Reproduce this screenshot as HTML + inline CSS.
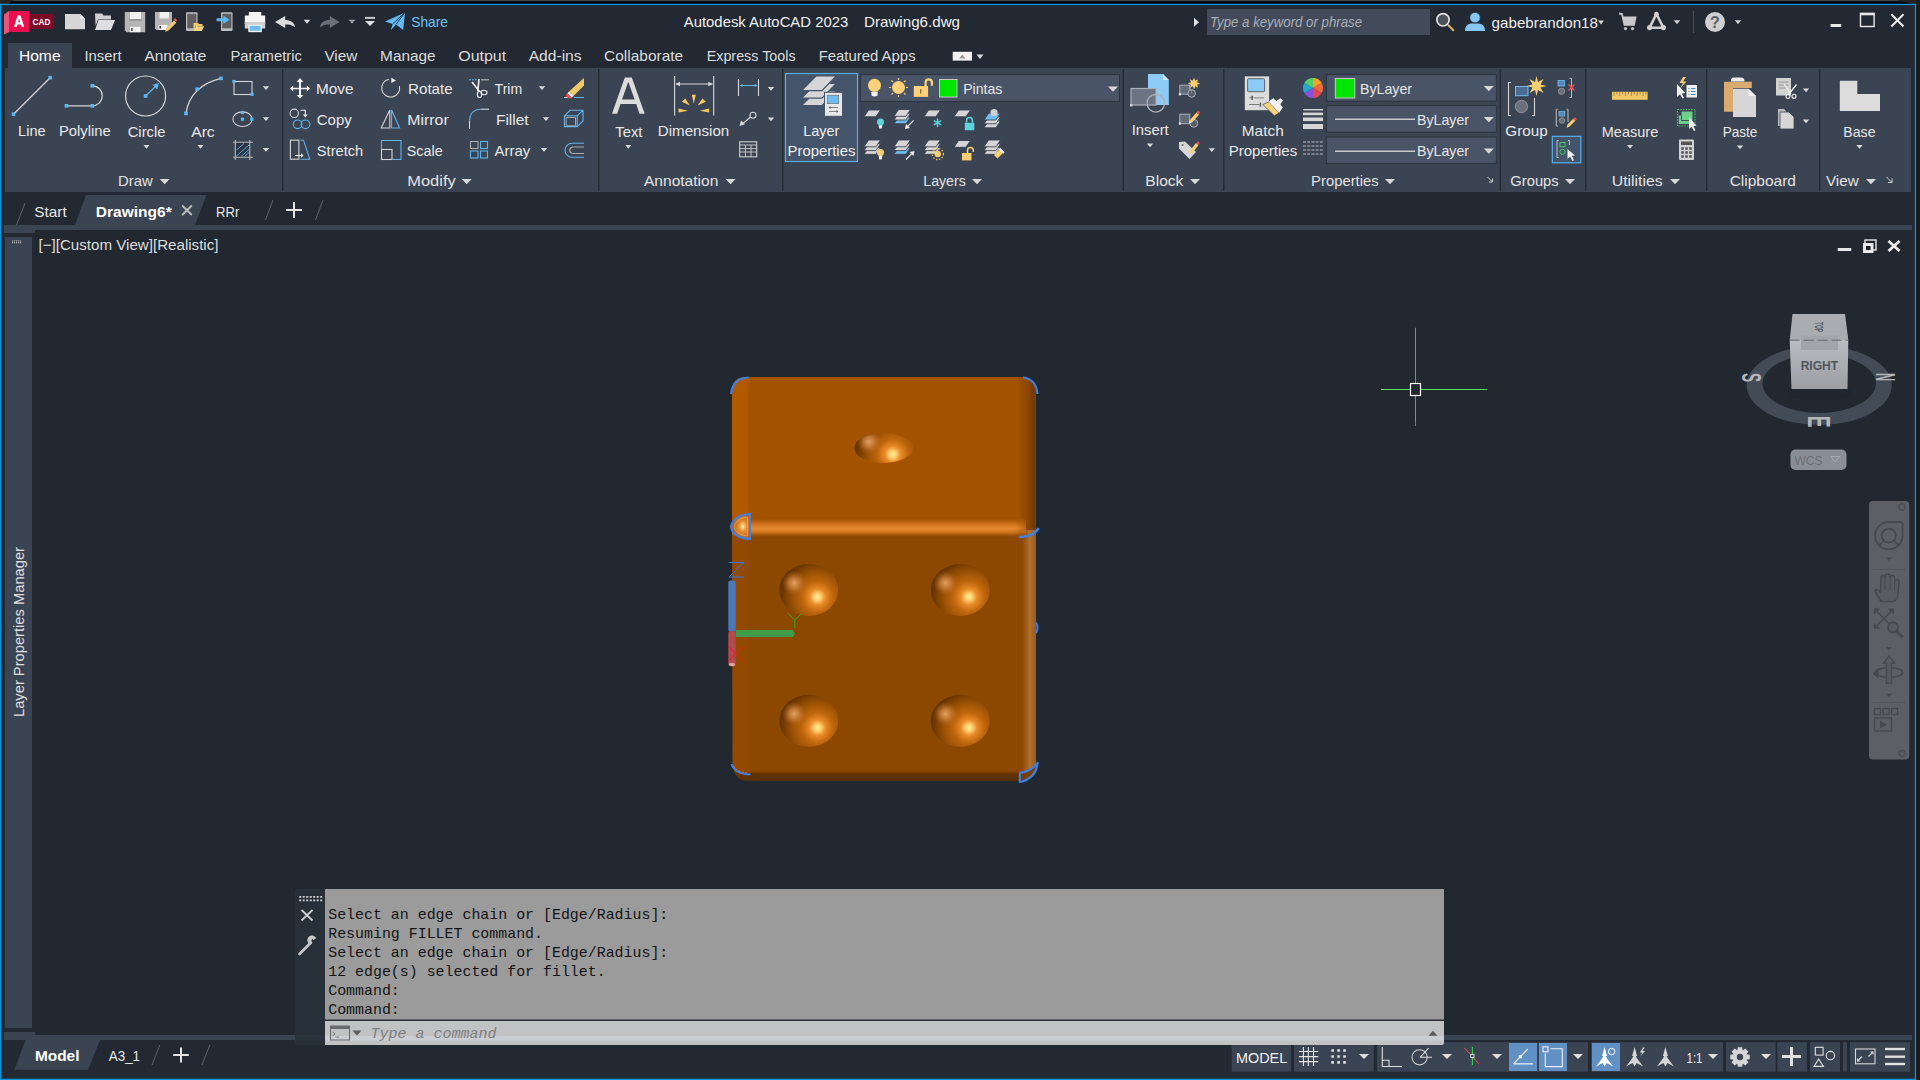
<!DOCTYPE html>
<html><head><meta charset="utf-8"><title>AutoCAD</title>
<style>
html,body{margin:0;padding:0;background:#222933;overflow:hidden;width:1920px;height:1080px}
svg{display:block}
text{white-space:pre}
</style></head><body>
<svg width="1920" height="1080" viewBox="0 0 1920 1080">
<rect x="0" y="0" width="1920" height="1080" fill="#222933" />
<rect x="0" y="0" width="1920" height="1.2" fill="#484644" />
<rect x="0" y="1.2" width="1920" height="2.7" fill="#03050d" />
<path d="M0 0 L14 0 Q11 1 9 3.9 L0 3.9 Z" fill="#252321"/>
<path d="M1895 1.2 Q1908 1.5 1912 3.9 L1920 3.9 L1920 0 L1900 0 Z" fill="#252321"/>
<rect x="1916" y="0" width="4" height="1080" fill="#1c1917" />
<rect x="0" y="3.8" width="1916.1" height="1.3" fill="#0b96da" />
<rect x="0" y="3.8" width="1.3" height="1076.2" fill="#0b96da" />
<rect x="1914.8" y="3.8" width="1.3" height="1076.2" fill="#0b96da" />
<rect x="0" y="1078.7" width="1916.1" height="1.3" fill="#0b96da" />
<rect x="8" y="43" width="64" height="25" fill="#3b4453" />
<rect x="5" y="68" width="1906" height="124" fill="#3b4453" />
<rect x="282" y="69" width="1.5" height="122" fill="#262c36" />
<rect x="598" y="69" width="1.5" height="122" fill="#262c36" />
<rect x="782" y="69" width="1.5" height="122" fill="#262c36" />
<rect x="1122.5" y="69" width="1.5" height="122" fill="#262c36" />
<rect x="1223" y="69" width="1.5" height="122" fill="#262c36" />
<rect x="1499.5" y="69" width="1.5" height="122" fill="#262c36" />
<rect x="1585" y="69" width="1.5" height="122" fill="#262c36" />
<rect x="1706" y="69" width="1.5" height="122" fill="#262c36" />
<rect x="1819" y="69" width="1.5" height="122" fill="#262c36" />
<path d="M86 195 L206.5 195 L195 225 L75 225 Z" fill="#3b4453"/>
<rect x="4" y="225" width="1908" height="5" fill="#3b4453" />
<rect x="35" y="230" width="1877" height="805" fill="#212830" />
<rect x="4" y="230" width="31" height="3" fill="#3b4453" />
<rect x="5" y="237" width="27" height="791" fill="#3b4453" />
<rect x="4" y="1032" width="31" height="3" fill="#3b4453" />
<rect x="4" y="1035" width="1908" height="5" fill="#3b4453" />
<path d="M4 14.5 L9 11 L9 32 L4 34.5 Z" fill="#e9557f"/>
<rect x="9" y="11" width="20" height="21" fill="#e8104f" />
<rect x="29" y="14" width="25" height="15" fill="#7c0a27" />
<path d="M14 26.8 L17.6 15.4 L20.6 15.4 L24.2 26.8 L21.4 26.8 L20.7 24.4 L17.5 24.4 L16.8 26.8 Z M18.1 22.2 L20.1 22.2 L19.1 18.6 Z" fill="#fff"/>
<text x="32.6" y="24.8" font-family="Liberation Sans" font-size="8.6" fill="#ffffff" font-weight="bold" font-style="normal" text-anchor="start" textLength="17.8" lengthAdjust="spacingAndGlyphs" >CAD</text>
<path d="M65 14 L80.5 14 L85 18.5 L85 29.3 L65 29.3 Z" fill="#d6d6d6"/>
<path d="M80.5 14 L80.5 18.5 L85 18.5 Z" fill="#f2f2f2"/>
<path d="M95 13.5 L102 13.5 L103.5 15.5 L111 15.5 L111 19.5 L98 19.5 L95.6 26 Z" fill="#d0d0d0"/>
<path d="M98.5 20 L115 20 L111 30 L95 30 Z" fill="#dedede"/>
<path d="M124.8 12 L145.2 12 L145.2 32.2 L126.5 32.2 L124.8 30.5 Z" fill="#b4b4b4"/>
<rect x="130" y="12" width="11" height="7.5" fill="#f0f0f0" />
<rect x="129.5" y="19.5" width="12" height="0.8" fill="#5a5a5a" />
<rect x="130" y="26.8" width="10.5" height="5.4" fill="#f2f2f2" />
<rect x="131.2" y="28" width="1.4" height="3" fill="#333" />
<path d="M155 12 L172 12 L172 24 L166 30 L156.5 30 L155 28.5 Z" fill="#b4b4b4"/>
<rect x="159.5" y="12" width="9.5" height="6.5" fill="#f0f0f0" />
<rect x="158.5" y="25" width="9" height="5" fill="#f2f2f2" />
<rect x="159.5" y="26" width="1.6" height="2.5" fill="#333" />
<path d="M165 32 L166.5 28 L174 20.5 L176.3 22.8 L168.8 30.3 Z" fill="#f3c86b"/>
<path d="M173.5 19.5 L175 18 L177.3 20.3 L175.8 21.8 Z" fill="#e9545a"/>
<rect x="186" y="12.2" width="11.5" height="18.8" fill="#bdbdbd" rx="1"/>
<rect x="187.2" y="13.8" width="9.2" height="14.5" fill="#5f5f5f" />
<path d="M193.5 23 L198 23 L199 24 L202.5 24 L202.5 26 L195.5 26 L193.5 31 Z" fill="#f4c76a"/>
<path d="M195.8 26.2 L204.2 26.2 L201.8 31 L193.5 31 Z" fill="#f8d47e"/>
<rect x="221" y="12.2" width="11.5" height="18.8" fill="#bdbdbd" rx="1"/>
<rect x="222.2" y="13.8" width="9.2" height="14.5" fill="#5f5f5f" />
<path d="M217 18.8 L223.8 18.8 L223.8 16.4 L228.8 19.8 L223.8 23.2 L223.8 20.8 L217 20.8 Z" fill="#5cb8f2" stroke="#5cb8f2" stroke-width="1"/>
<rect x="248.8" y="12" width="12.5" height="6.6" fill="#f4f4f4" />
<rect x="244.8" y="15.5" width="20.4" height="8.5" fill="#f4f4f4" />
<rect x="244.8" y="22" width="20.4" height="6.5" fill="#cfcfcf" />
<rect x="248.3" y="24.8" width="13.5" height="7.4" fill="#f4f4f4" />
<rect x="249.6" y="25.8" width="11" height="5" fill="#6fbcf0" />
<path d="M275 22 L285.2 16 L285.2 20 C290 20 294.5 22 295.2 27.5 C292.5 25 289.5 24.5 285.2 24.5 L285.2 28 Z" fill="#dcdcdc"/>
<path d="M303.75 19.8 L310.25 19.8 L307 23.8 Z" fill="#dcdcdc"/>
<path d="M339.5 22 L329.8 16 L329.8 20 C325 20 320.5 22 320 27.5 C322.5 25 325.5 24.5 329.8 24.5 L329.8 28 Z" fill="#6a707a"/>
<path d="M348.75 19.8 L355.25 19.8 L352 23.8 Z" fill="#9a9ea4"/>
<rect x="365" y="16.9" width="10" height="2" fill="#c8c8c8" />
<path d="M365.0 21 L375.0 21 L370 26 Z" fill="#e0e0e0"/>
<path d="M385 21.5 L405 12.4 L403.2 30 L396 24.5 L390.8 30.2 L392.6 24 Z" fill="#62bbf4"/>
<path d="M392.6 24 L405 12.4 M396 24.5 L405 12.4" stroke="#222933" stroke-width="0.9"/>
<text x="411.2" y="27" font-family="Liberation Sans" font-size="15" fill="#6cc2f7" font-weight="normal" font-style="normal" text-anchor="start" textLength="36.8" lengthAdjust="spacingAndGlyphs" >Share</text>
<text x="683.8" y="26.6" font-family="Liberation Sans" font-size="15" fill="#f0f0f0" font-weight="normal" font-style="normal" text-anchor="start" textLength="164.4" lengthAdjust="spacingAndGlyphs" >Autodesk AutoCAD 2023</text>
<text x="864" y="26.6" font-family="Liberation Sans" font-size="15" fill="#f0f0f0" font-weight="normal" font-style="normal" text-anchor="start" textLength="96" lengthAdjust="spacingAndGlyphs" >Drawing6.dwg</text>
<path d="M1194 17.7 L1199 22.2 L1194 26.7 Z" fill="#e0e0e0"/>
<rect x="1207" y="9" width="223" height="26" fill="#434b5b" />
<text x="1210" y="27" font-family="Liberation Sans" font-size="14" fill="#a9aeb6" font-weight="normal" font-style="italic" text-anchor="start" textLength="152" lengthAdjust="spacingAndGlyphs" >Type a keyword or phrase</text>
<path d="M1448.4 25.3 L1453.3 30.2" stroke="#dcae70" stroke-width="2.1" stroke-linecap="round"/>
<circle cx="1443" cy="19.8" r="6.2" fill="#4b5159" stroke="#e2e2e2" stroke-width="1.7"/>
<path d="M1465 31 Q1465 24 1471 23.5 L1479 23.5 Q1485 24 1485 31 Z" fill="#86c6f4"/>
<circle cx="1475" cy="17.6" r="5.3" fill="#86c6f4" stroke="#222933" stroke-width="0.8"/>
<text x="1491.6" y="27.6" font-family="Liberation Sans" font-size="15" fill="#ececec" font-weight="normal" font-style="normal" text-anchor="start" textLength="106.4" lengthAdjust="spacingAndGlyphs" >gabebrandon18</text>
<path d="M1598.0 20.5 L1604.0 20.5 L1601 24.5 Z" fill="#d8d8d8"/>
<path d="M1619 13.5 L1622 14 L1624.5 24.8 L1634 24.8 L1635.5 17.5 L1622.8 17.5" fill="none" stroke="#c9c9c9" stroke-width="1.8"/>
<path d="M1623 17.5 L1635.5 17.5 L1634 24.5 L1624.5 24.5 Z" fill="#c9c9c9"/>
<circle cx="1625.5" cy="28.6" r="1.6" fill="#c9c9c9"/><circle cx="1632.5" cy="28.6" r="1.6" fill="#c9c9c9"/>
<path d="M1656.4 14 L1649.5 27.8 L1663.5 27.8 Z" fill="none" stroke="#d0d0d0" stroke-width="2.6" stroke-linejoin="round"/>
<circle cx="1656.4" cy="14.2" r="2.4" fill="#d0d0d0"/><circle cx="1649.6" cy="27.6" r="2.6" fill="#d0d0d0"/><circle cx="1663.4" cy="27.6" r="2.6" fill="#d0d0d0"/>
<path d="M1673.75 20.2 L1680.25 20.2 L1677 24.2 Z" fill="#d0d0d0"/>
<rect x="1693" y="11" width="1" height="22" fill="#4a5260" />
<circle cx="1715" cy="22" r="10" fill="#cfcfcf"/>
<text x="1715" y="28.2" font-family="Liberation Sans" font-size="16" fill="#5a5f66" font-weight="bold" font-style="normal" text-anchor="middle" >?</text>
<path d="M1734.75 20.2 L1741.25 20.2 L1738 24.2 Z" fill="#d0d0d0"/>
<rect x="1830.6" y="24" width="10.6" height="3" fill="#e8e8e8" />
<rect x="1860.5" y="13.5" width="13.6" height="13" fill="none" stroke="#e8e8e8" stroke-width="1.4"/>
<rect x="1860" y="12.8" width="14.8" height="2.5" fill="#e8e8e8" />
<path d="M1891.3 14.3 L1903.5 26.5 M1903.5 14.3 L1891.3 26.5" stroke="#eeeeee" stroke-width="2"/>
<text x="18.9" y="61" font-family="Liberation Sans" font-size="15" fill="#ffffff" font-weight="normal" font-style="normal" text-anchor="start" textLength="41.7" lengthAdjust="spacingAndGlyphs" >Home</text>
<text x="84.4" y="61" font-family="Liberation Sans" font-size="15" fill="#dcdcdc" font-weight="normal" font-style="normal" text-anchor="start" textLength="37.2" lengthAdjust="spacingAndGlyphs" >Insert</text>
<text x="144.4" y="61" font-family="Liberation Sans" font-size="15" fill="#dcdcdc" font-weight="normal" font-style="normal" text-anchor="start" textLength="61.9" lengthAdjust="spacingAndGlyphs" >Annotate</text>
<text x="230.4" y="61" font-family="Liberation Sans" font-size="15" fill="#dcdcdc" font-weight="normal" font-style="normal" text-anchor="start" textLength="71.5" lengthAdjust="spacingAndGlyphs" >Parametric</text>
<text x="324.4" y="61" font-family="Liberation Sans" font-size="15" fill="#dcdcdc" font-weight="normal" font-style="normal" text-anchor="start" textLength="33.0" lengthAdjust="spacingAndGlyphs" >View</text>
<text x="380.09999999999997" y="61" font-family="Liberation Sans" font-size="15" fill="#dcdcdc" font-weight="normal" font-style="normal" text-anchor="start" textLength="55.5" lengthAdjust="spacingAndGlyphs" >Manage</text>
<text x="458.29999999999995" y="61" font-family="Liberation Sans" font-size="15" fill="#dcdcdc" font-weight="normal" font-style="normal" text-anchor="start" textLength="47.8" lengthAdjust="spacingAndGlyphs" >Output</text>
<text x="528.6999999999999" y="61" font-family="Liberation Sans" font-size="15" fill="#dcdcdc" font-weight="normal" font-style="normal" text-anchor="start" textLength="52.9" lengthAdjust="spacingAndGlyphs" >Add-ins</text>
<text x="604.1" y="61" font-family="Liberation Sans" font-size="15" fill="#dcdcdc" font-weight="normal" font-style="normal" text-anchor="start" textLength="79.1" lengthAdjust="spacingAndGlyphs" >Collaborate</text>
<text x="706.6999999999999" y="61" font-family="Liberation Sans" font-size="15" fill="#dcdcdc" font-weight="normal" font-style="normal" text-anchor="start" textLength="88.9" lengthAdjust="spacingAndGlyphs" >Express Tools</text>
<text x="818.6999999999999" y="61" font-family="Liberation Sans" font-size="15" fill="#dcdcdc" font-weight="normal" font-style="normal" text-anchor="start" textLength="96.9" lengthAdjust="spacingAndGlyphs" >Featured Apps</text>
<rect x="952.7" y="51.8" width="19.3" height="8.8" fill="#f2f2f2" />
<path d="M959 58.5 L962.3 54.5 L965.6 58.5 Z" fill="#9a9a9a"/>
<path d="M976.5 54.5 L983.5 54.5 L980 59.0 Z" fill="#d8d8d8"/>
<path d="M13.5 114.2 L50.2 77.7" stroke="#d4d4d4" stroke-width="1.2"/>
<rect x="11.7" y="112.4" width="3.6" height="3.6" fill="#5ab7f4" />
<rect x="48.4" y="75.9" width="3.6" height="3.6" fill="#5ab7f4" />
<text x="18.05" y="135.8" font-family="Liberation Sans" font-size="15" fill="#e8e8e8" font-weight="normal" font-style="normal" text-anchor="start" textLength="27.65" lengthAdjust="spacingAndGlyphs" >Line</text>
<path d="M66.4 105.8 L92.3 105.8 M92.3 85.8 A10 10 0 0 1 92.3 105.8" fill="none" stroke="#d4d4d4" stroke-width="1.2"/>
<rect x="64.6" y="104.0" width="3.6" height="3.6" fill="#5ab7f4" />
<rect x="90.5" y="104.0" width="3.6" height="3.6" fill="#5ab7f4" />
<rect x="90.5" y="84.0" width="3.6" height="3.6" fill="#5ab7f4" />
<text x="58.9" y="135.8" font-family="Liberation Sans" font-size="15" fill="#e8e8e8" font-weight="normal" font-style="normal" text-anchor="start" textLength="51.8" lengthAdjust="spacingAndGlyphs" >Polyline</text>
<circle cx="145.6" cy="96" r="20" fill="none" stroke="#d4d4d4" stroke-width="1.2"/>
<path d="M145.6 96 L156.5 85.5" stroke="#5ab7f4" stroke-width="1.3"/>
<path d="M159 83 L152.5 84.8 L157.2 89.5 Z" fill="#5ab7f4"/>
<rect x="143.8" y="94.2" width="3.6" height="3.6" fill="#5ab7f4" />
<text x="127.7" y="136.5" font-family="Liberation Sans" font-size="15" fill="#e8e8e8" font-weight="normal" font-style="normal" text-anchor="start" textLength="37.8" lengthAdjust="spacingAndGlyphs" >Circle</text>
<path d="M143.5 145 L149.5 145 L146.5 148.8 Z" fill="#d8d8d8"/>
<path d="M186 113.4 Q190 86 221 78.4" fill="none" stroke="#d4d4d4" stroke-width="1.2"/>
<rect x="184.2" y="111.6" width="3.6" height="3.6" fill="#5ab7f4" />
<rect x="195.4" y="87.4" width="3.6" height="3.6" fill="#5ab7f4" />
<rect x="219.2" y="76.6" width="3.6" height="3.6" fill="#5ab7f4" />
<text x="191.2" y="136.5" font-family="Liberation Sans" font-size="15" fill="#e8e8e8" font-weight="normal" font-style="normal" text-anchor="start" textLength="23.5" lengthAdjust="spacingAndGlyphs" >Arc</text>
<path d="M197.5 145 L203.5 145 L200.5 148.8 Z" fill="#d8d8d8"/>
<rect x="234" y="81.5" width="18" height="13" fill="none" stroke="#d4d4d4" stroke-width="1.1"/>
<rect x="232.4" y="79.9" width="3.2" height="3.2" fill="#5ab7f4" />
<rect x="250.4" y="92.7" width="3.2" height="3.2" fill="#5ab7f4" />
<path d="M262.8 86.2 L269.2 86.2 L266 90.0 Z" fill="#d8d8d8"/>
<ellipse cx="242.5" cy="119.2" rx="9.6" ry="7.3" fill="none" stroke="#d4d4d4" stroke-width="1.1"/>
<rect x="240.9" y="110.9" width="3.2" height="3.2" fill="#5ab7f4" />
<rect x="240.9" y="117.6" width="3.2" height="3.2" fill="#5ab7f4" />
<rect x="250.2" y="117.6" width="3.2" height="3.2" fill="#5ab7f4" />
<path d="M262.8 117.2 L269.2 117.2 L266 121.0 Z" fill="#d8d8d8"/>
<rect x="235.5" y="142.2" width="14.5" height="15" fill="#2e3542"/>
<path d="M235.3 140 L235.3 160 M249.7 140 L249.7 160 M233 142.2 L253 142.2 M233 157.3 L253 157.3" stroke="#b8b8b8" stroke-width="1.1"/>
<path d="M236.5 150 L244 143.5 M236.5 156 L249 145 M241 156.5 L249 149.5 M244.5 156.5 L249 152.5" stroke="#5fb4ee" stroke-width="0.9"/>
<path d="M262.8 148 L269.2 148 L266 151.8 Z" fill="#d8d8d8"/>
<text x="118.05" y="185.6" font-family="Liberation Sans" font-size="15" fill="#e2e2e2" font-weight="normal" font-style="normal" text-anchor="start" textLength="34.65" lengthAdjust="spacingAndGlyphs" >Draw</text>
<path d="M159.7 179 L169.7 179 L164.7 184.2 Z" fill="#d8d8d8"/>
<path d="M300 78 L303.3 82 L301 82 L301 87.8 L306.8 87.8 L306.8 85.5 L310 88.5 L306.8 91.5 L306.8 89.2 L301 89.2 L301 95 L303.3 95 L300 98.5 L296.7 95 L299 95 L299 89.2 L293.2 89.2 L293.2 91.5 L290 88.5 L293.2 85.5 L293.2 87.8 L299 87.8 L299 82 L296.7 82 Z" fill="#f0f0f0"/>
<text x="316.0" y="94.2" font-family="Liberation Sans" font-size="15" fill="#e8e8e8" font-weight="normal" font-style="normal" text-anchor="start" textLength="37.5" lengthAdjust="spacingAndGlyphs" >Move</text>
<circle cx="294.3" cy="113.3" r="4.2" fill="none" stroke="#d4d4d4" stroke-width="1.1"/>
<path d="M300.5 110.3 L305.3 110.3 L305.3 115" fill="none" stroke="#eee" stroke-width="1.1"/>
<path d="M302.8 114.5 L307.8 114.5 L305.3 117.5 Z" fill="#eee"/>
<circle cx="297.6" cy="124.3" r="4.3" fill="none" stroke="#5fb4ee" stroke-width="1.1"/>
<circle cx="305.5" cy="124.3" r="4.3" fill="none" stroke="#5fb4ee" stroke-width="1.1"/>
<text x="316.8" y="124.5" font-family="Liberation Sans" font-size="15" fill="#e8e8e8" font-weight="normal" font-style="normal" text-anchor="start" textLength="34.9" lengthAdjust="spacingAndGlyphs" >Copy</text>
<rect x="290.4" y="140.2" width="8.5" height="19" fill="none" stroke="#d4d4d4" stroke-width="1.1"/>
<path d="M300.5 140.2 L303.5 140.2 L309.8 159.2 L300.5 159.2" fill="none" stroke="#5fb4ee" stroke-width="1.1"/>
<path d="M295 155.5 L301.5 155.5" stroke="#eee" stroke-width="1.1"/><path d="M301 153.3 L303.6 155.5 L301 157.7 Z" fill="#eee"/>
<text x="316.8" y="155.8" font-family="Liberation Sans" font-size="15" fill="#e8e8e8" font-weight="normal" font-style="normal" text-anchor="start" textLength="46.4" lengthAdjust="spacingAndGlyphs" >Stretch</text>
<path d="M389 79.2 A9 9 0 1 0 399.4 86" fill="none" stroke="#d4d4d4" stroke-width="1.1"/>
<path d="M391.3 77.8 L396 80.4 L391.3 83 Z" fill="#eee"/>
<text x="408.0" y="94.2" font-family="Liberation Sans" font-size="15" fill="#e8e8e8" font-weight="normal" font-style="normal" text-anchor="start" textLength="44.7" lengthAdjust="spacingAndGlyphs" >Rotate</text>
<path d="M381.2 128 L389.8 110 L389.8 128 Z" fill="none" stroke="#d4d4d4" stroke-width="1.1"/>
<path d="M391.6 110 L391.6 128 L399.6 128 Z" fill="none" stroke="#5fb4ee" stroke-width="1.1"/>
<text x="407.3" y="124.5" font-family="Liberation Sans" font-size="15" fill="#e8e8e8" font-weight="normal" font-style="normal" text-anchor="start" textLength="41.4" lengthAdjust="spacingAndGlyphs" >Mirror</text>
<path d="M381.5 149 L381.5 140.5 L401 140.5 L401 159.5 L392.5 159.5" fill="none" stroke="#5fb4ee" stroke-width="1.1"/>
<rect x="381.5" y="149.5" width="10.5" height="10" fill="none" stroke="#d4d4d4" stroke-width="1.1"/>
<text x="406.8" y="155.8" font-family="Liberation Sans" font-size="15" fill="#e8e8e8" font-weight="normal" font-style="normal" text-anchor="start" textLength="35.9" lengthAdjust="spacingAndGlyphs" >Scale</text>
<path d="M469 79.8 L479 79.8" stroke="#5fb4ee" stroke-width="1.1" stroke-dasharray="2 1"/><path d="M481 79.8 L489 79.8" stroke="#bbb" stroke-width="1.1"/>
<path d="M472 82 L479.5 91.5 M479 79 L477.8 91.5" stroke="#f0f0f0" stroke-width="1.6"/>
<ellipse cx="479.5" cy="94.5" rx="2.2" ry="3" fill="none" stroke="#f0f0f0" stroke-width="1.1"/><ellipse cx="484" cy="92.5" rx="3" ry="2.2" fill="none" stroke="#f0f0f0" stroke-width="1.1"/>
<text x="494.6" y="94.2" font-family="Liberation Sans" font-size="15" fill="#e8e8e8" font-weight="normal" font-style="normal" text-anchor="start" textLength="27.6" lengthAdjust="spacingAndGlyphs" >Trim</text>
<path d="M538.8 86.2 L545.2 86.2 L542 90.0 Z" fill="#d8d8d8"/>
<path d="M469.5 129 L469.5 121 " stroke="#d4d4d4" stroke-width="1.1"/><path d="M469.5 121 Q470 109.5 480.5 109.2" fill="none" stroke="#5fb4ee" stroke-width="1.1"/><path d="M480.5 109.2 L489 109.2" stroke="#d4d4d4" stroke-width="1.1"/>
<text x="495.9" y="124.5" font-family="Liberation Sans" font-size="15" fill="#e8e8e8" font-weight="normal" font-style="normal" text-anchor="start" textLength="32.8" lengthAdjust="spacingAndGlyphs" >Fillet</text>
<path d="M542.8 117.2 L549.2 117.2 L546 121.0 Z" fill="#d8d8d8"/>
<rect x="470.5" y="141.5" width="7.5" height="7" fill="none" stroke="#aaa" stroke-width="1.1"/>
<rect x="480.5" y="141.5" width="7" height="7" fill="none" stroke="#5fb4ee" stroke-width="1.1"/>
<rect x="470.5" y="151" width="7.5" height="7" fill="none" stroke="#5fb4ee" stroke-width="1.1"/>
<rect x="480.5" y="151" width="7" height="7" fill="none" stroke="#5fb4ee" stroke-width="1.1"/>
<text x="494.5" y="155.8" font-family="Liberation Sans" font-size="15" fill="#e8e8e8" font-weight="normal" font-style="normal" text-anchor="start" textLength="35.7" lengthAdjust="spacingAndGlyphs" >Array</text>
<path d="M540.8 148 L547.2 148 L544 151.8 Z" fill="#d8d8d8"/>
<path d="M584 78 L584 85.5 L573.5 96 L569 91.5 Z" fill="#f2c866"/>
<path d="M569 91.5 L573.5 96 L571.8 97.8 L567.3 93.3 Z" fill="#f4f4f4"/>
<path d="M567.3 93.3 L571.8 97.8 L570 98.5 Q566 98 566 95 Z" fill="#e84b50"/>
<path d="M564 97.5 L567.5 97.5" stroke="#ddd" stroke-width="1"/><path d="M574 97.5 L584 97.5" stroke="#5fb4ee" stroke-width="1"/>
<path d="M564.4 126.6 L564.4 115.8 L570.2 110.2 L583 110.2 L583 121 L577.2 126.6 Z M564.4 115.8 L577.2 115.8 L583 110.2 M577.2 115.8 L577.2 126.6" fill="none" stroke="#5fb4ee" stroke-width="1.1" stroke-linejoin="round"/>
<path d="M566.2 125.8 L566.2 117.5 L575.5 117.5 L575.5 125.8 Z" fill="none" stroke="#a8a8a8" stroke-width="1"/>
<path d="M584 143.2 L572 143.2 A7 7 0 0 0 572 157.3 L584 157.3" fill="none" stroke="#5fb4ee" stroke-width="1.1"/>
<path d="M584 147 L572.5 147 A3.3 3.3 0 0 0 572.5 153.5 L584 153.5" fill="none" stroke="#aaa" stroke-width="1.1"/>
<text x="407.3" y="185.6" font-family="Liberation Sans" font-size="15" fill="#e2e2e2" font-weight="normal" font-style="normal" text-anchor="start" textLength="48.4" lengthAdjust="spacingAndGlyphs" >Modify</text>
<path d="M461.7 179 L471.7 179 L466.7 184.2 Z" fill="#d8d8d8"/>
<path d="M612 113.7 L624.8 77.5 L631.8 77.5 L644.7 113.7 L639.5 113.7 L636.2 104 L620.5 104 L617.2 113.7 Z M622 99.5 L634.6 99.5 L628.3 81.7 Z" fill="#dcdcdc"/>
<text x="615.3" y="136.6" font-family="Liberation Sans" font-size="15" fill="#e8e8e8" font-weight="normal" font-style="normal" text-anchor="start" textLength="27.2" lengthAdjust="spacingAndGlyphs" >Text</text>
<path d="M625.3 145 L631.3 145 L628.3 148.8 Z" fill="#d8d8d8"/>
<path d="M674.6 76 L674.6 115.5 M713.7 76 L713.7 115.5 M676 84 L712.5 84" stroke="#d8d8d8" stroke-width="1.1"/>
<path d="M675.5 84 L680 81.7 L680 86.3 Z M712.8 84 L708.3 81.7 L708.3 86.3 Z" fill="#d8d8d8"/>
<path d="M691.8 94.8 L695.8 94.8 L693.8 103.8 Z M681.8 101.8 L685.2 98.4 L690 105.6 Z M705.8 101.8 L702.4 98.4 L697.6 105.6 Z M678.5 108.6 L678.5 112.6 L688 110.8 Z M709.1 108.6 L709.1 112.6 L699.6 110.8 Z" fill="#f5c862"/>
<text x="657.8" y="136.2" font-family="Liberation Sans" font-size="15" fill="#e8e8e8" font-weight="normal" font-style="normal" text-anchor="start" textLength="71.4" lengthAdjust="spacingAndGlyphs" >Dimension</text>
<path d="M738.5 79 L738.5 96 M758.5 79 L758.5 96" stroke="#d8d8d8" stroke-width="1.1"/><path d="M740 85.5 L757 85.5" stroke="#5fb4ee" stroke-width="1.1"/>
<path d="M739.6 85.5 L742.5 84 L742.5 87 Z M757.5 85.5 L754.6 84 L754.6 87 Z" fill="#5fb4ee"/>
<path d="M767.8 87 L774.2 87 L771 90.8 Z" fill="#d8d8d8"/>
<circle cx="753" cy="115.2" r="3" fill="none" stroke="#d8d8d8" stroke-width="1.1"/><path d="M750.5 117 L743 123.5" stroke="#d8d8d8" stroke-width="1.1"/><path d="M739.5 126 L741 120.5 L745 124.2 Z" fill="#d8d8d8"/>
<path d="M767.8 117.5 L774.2 117.5 L771 121.3 Z" fill="#d8d8d8"/>
<rect x="739.7" y="141.8" width="17" height="15" fill="none" stroke="#cfcfcf" stroke-width="1.1"/><path d="M739.7 145 L756.7 145 M739.7 148.6 L756.7 148.6 M739.7 152 L756.7 152 M745.4 145 L745.4 156.8 M751 145 L751 156.8" stroke="#cfcfcf" stroke-width="0.9"/>
<text x="644.0" y="185.6" font-family="Liberation Sans" font-size="15" fill="#e2e2e2" font-weight="normal" font-style="normal" text-anchor="start" textLength="74.3" lengthAdjust="spacingAndGlyphs" >Annotation</text>
<path d="M725.6 179 L735.6 179 L730.6 184.2 Z" fill="#d8d8d8"/>
<rect x="785.5" y="73.5" width="72" height="88" fill="#44546a" stroke="#5aaef0" stroke-width="1.2"/>
<path d="M801.6 105.7 L816 91 L836.3 91 L821.9 105.7 Z" fill="#d6d6d6" stroke="#44546a" stroke-width="1.2"/>
<path d="M801.6 98.2 L816 83.5 L836.3 83.5 L821.9 98.2 Z" fill="#d6d6d6" stroke="#44546a" stroke-width="1.2"/>
<path d="M801.6 90.7 L816 76 L836.3 76 L821.9 90.7 Z" fill="#d6d6d6" stroke="#44546a" stroke-width="1.2"/>
<rect x="824.5" y="92.3" width="18" height="24" fill="#e8e8e8" stroke="#44546a" stroke-width="1"/>
<rect x="827.2" y="95.2" width="11.5" height="8.5" fill="#6fbcf0" stroke="#666" stroke-width="0.6"/>
<path d="M829 107.5 L838 107.5 M829 111.5 L838 111.5" stroke="#666" stroke-width="0.8"/><path d="M828.5 107.5 L830.5 106 L830.5 109 Z M838.5 111.5 L836.5 110 L836.5 113 Z" fill="#666"/>
<text x="803.3" y="135.8" font-family="Liberation Sans" font-size="15" fill="#f0f0f0" font-weight="normal" font-style="normal" text-anchor="start" textLength="36.0" lengthAdjust="spacingAndGlyphs" >Layer</text>
<text x="787.6" y="155.5" font-family="Liberation Sans" font-size="15" fill="#f0f0f0" font-weight="normal" font-style="normal" text-anchor="start" textLength="67.8" lengthAdjust="spacingAndGlyphs" >Properties</text>
<rect x="860.5" y="74.6" width="259" height="27" fill="#4a5467" stroke="#2c333f" stroke-width="1"/>
<circle cx="874.5" cy="85.3" r="6.5" fill="#fbd27a"/><path d="M871.3 91.8 L877.7 91.8 L877.5 95.5 Q874.5 97.5 871.5 95.5 Z" fill="#f2f2f2"/>
<circle cx="898.5" cy="87.5" r="6.5" fill="#fbd27a"/>
<path d="M898.5 78 L898.5 80 M898.5 95 L898.5 97 M889 87.5 L891 87.5 M906 87.5 L908 87.5 M891.5 80.5 L893 82 M904 93 L905.5 94.5 M905.5 80.5 L904 82 M893 93 L891.5 94.5" stroke="#fbd27a" stroke-width="1.2"/>
<rect x="913.8" y="86" width="14.3" height="10.9" fill="#fbd27a"/><path d="M925.6 86.5 L925.6 82.5 Q925.6 79.3 928.8 79.3 Q931.9 79.3 931.9 82.5 L931.9 85.8" fill="none" stroke="#fbd27a" stroke-width="2.2"/>
<rect x="920.2" y="89.2" width="1.1" height="4.3" fill="#6a5a3a" />
<rect x="939.5" y="79.5" width="17.5" height="17.5" fill="#00e600" stroke="#c8c8c8" stroke-width="1"/>
<text x="963.2" y="93.8" font-family="Liberation Sans" font-size="15" fill="#e6e6e6" font-weight="normal" font-style="normal" text-anchor="start" textLength="39.2" lengthAdjust="spacingAndGlyphs" >Pintas</text>
<path d="M1108.0 86.5 L1118.0 86.5 L1113 91.7 Z" fill="#d8d8d8"/>
<path d="M864 116.8 L868.6 110 L880.5 110 L875.9 116.8 Z" fill="#d6d6d6" stroke="#3b4453" stroke-width="0.9"/>
<circle cx="880.5" cy="122" r="3.5" fill="#5fd3dc"/><path d="M878.7 125.3 L882.3 125.3 L881.8 128.5 L879.2 128.5 Z" fill="#f0f0f0"/>
<path d="M894 123.8 L898.6 117 L910.5 117 L905.9 123.8 Z" fill="#6fbcf0" stroke="#3b4453" stroke-width="0.9"/>
<path d="M894 120.0 L898.6 113.2 L910.5 113.2 L905.9 120.0 Z" fill="#d6d6d6" stroke="#3b4453" stroke-width="0.9"/>
<path d="M894 116.3 L898.6 109.5 L910.5 109.5 L905.9 116.3 Z" fill="#d6d6d6" stroke="#3b4453" stroke-width="0.9"/>
<path d="M913.5 120.5 L906.5 127.5" stroke="#eee" stroke-width="1.1"/><path d="M905 129 L906 124 L910 128 Z" fill="#eee"/>
<path d="M924 116.8 L928.6 110 L940.5 110 L935.9 116.8 Z" fill="#d6d6d6" stroke="#3b4453" stroke-width="0.9"/>
<path d="M937.5 118.5 L937.5 127 M933.8 120.6 L941.2 124.9 M941.2 120.6 L933.8 124.9" stroke="#5fd3dc" stroke-width="1.4"/>
<path d="M954 116.8 L958.6 110 L970.5 110 L965.9 116.8 Z" fill="#d6d6d6" stroke="#3b4453" stroke-width="0.9"/>
<rect x="964.8" y="122.8" width="9.5" height="7.4" fill="#5fd3dc"/><path d="M966.6 122.8 L966.6 120.5 Q966.6 117.5 969.5 117.5 Q972.4 117.5 972.4 120.5 L972.4 122.8" fill="none" stroke="#5fd3dc" stroke-width="1.5"/>
<path d="M984 127.8 L988.6 121 L1000.5 121 L995.9 127.8 Z" fill="#d6d6d6" stroke="#3b4453" stroke-width="0.9"/>
<path d="M984 123.8 L988.6 117 L1000.5 117 L995.9 123.8 Z" fill="#d6d6d6" stroke="#3b4453" stroke-width="0.9"/>
<path d="M984 120.0 L988.6 113.2 L1000.5 113.2 L995.9 120.0 Z" fill="#6fbcf0" stroke="#3b4453" stroke-width="0.9"/>
<circle cx="994" cy="112.5" r="3.6" fill="#d0d0d0"/>
<path d="M864 154.3 L868.6 147.5 L880.5 147.5 L875.9 154.3 Z" fill="#d6d6d6" stroke="#3b4453" stroke-width="0.9"/>
<path d="M864 150.60000000000002 L868.6 143.8 L880.5 143.8 L875.9 150.60000000000002 Z" fill="#d6d6d6" stroke="#3b4453" stroke-width="0.9"/>
<path d="M864 146.8 L868.6 140 L880.5 140 L875.9 146.8 Z" fill="#d6d6d6" stroke="#3b4453" stroke-width="0.9"/>
<circle cx="880.5" cy="152.5" r="3.5" fill="#f7cf72"/><path d="M878.7 155.8 L882.3 155.8 L881.8 159.5 L879.2 159.5 Z" fill="#f0f0f0"/>
<path d="M894 154.3 L898.6 147.5 L910.5 147.5 L905.9 154.3 Z" fill="#6fbcf0" stroke="#3b4453" stroke-width="0.9"/>
<path d="M894 150.60000000000002 L898.6 143.8 L910.5 143.8 L905.9 150.60000000000002 Z" fill="#d6d6d6" stroke="#3b4453" stroke-width="0.9"/>
<path d="M894 146.8 L898.6 140 L910.5 140 L905.9 146.8 Z" fill="#d6d6d6" stroke="#3b4453" stroke-width="0.9"/>
<path d="M906 159.5 L912.8 152.7" stroke="#eee" stroke-width="1.1"/><path d="M914.5 151 L913.5 156 L909.5 152 Z" fill="#eee"/>
<path d="M924 154.3 L928.6 147.5 L940.5 147.5 L935.9 154.3 Z" fill="#d6d6d6" stroke="#3b4453" stroke-width="0.9"/>
<path d="M924 150.60000000000002 L928.6 143.8 L940.5 143.8 L935.9 150.60000000000002 Z" fill="#d6d6d6" stroke="#3b4453" stroke-width="0.9"/>
<path d="M924 146.8 L928.6 140 L940.5 140 L935.9 146.8 Z" fill="#d6d6d6" stroke="#3b4453" stroke-width="0.9"/>
<circle cx="937.8" cy="154" r="3.2" fill="#f7cf72"/><circle cx="937.8" cy="154" r="5.6" fill="none" stroke="#f7cf72" stroke-width="1.2" stroke-dasharray="1.4 1.6"/>
<path d="M954 147.3 L958.6 140.5 L970.5 140.5 L965.9 147.3 Z" fill="#d6d6d6" stroke="#3b4453" stroke-width="0.9"/>
<rect x="962" y="153" width="9.5" height="7.4" fill="#f7cf72"/><path d="M967.5 153 L967.5 150.5 Q967.5 147.5 970.4 147.5 Q973.3 147.5 973.3 150.5 L973.3 152" fill="none" stroke="#f7cf72" stroke-width="1.5"/>
<path d="M984 154.3 L988.6 147.5 L1000.5 147.5 L995.9 154.3 Z" fill="#d6d6d6" stroke="#3b4453" stroke-width="0.9"/>
<path d="M984 150.60000000000002 L988.6 143.8 L1000.5 143.8 L995.9 150.60000000000002 Z" fill="#d6d6d6" stroke="#3b4453" stroke-width="0.9"/>
<path d="M984 146.8 L988.6 140 L1000.5 140 L995.9 146.8 Z" fill="#d6d6d6" stroke="#3b4453" stroke-width="0.9"/>
<path d="M994 155 L1000 149 L1003.5 152.5 L997.5 158.5 Z" fill="#f7cf72"/><path d="M999.5 148.5 L1004 153" stroke="#f0f0f0" stroke-width="2"/>
<text x="923.3" y="185.6" font-family="Liberation Sans" font-size="15" fill="#e2e2e2" font-weight="normal" font-style="normal" text-anchor="start" textLength="42.4" lengthAdjust="spacingAndGlyphs" >Layers</text>
<path d="M972.0 179 L982.0 179 L977 184.2 Z" fill="#d8d8d8"/>
<path d="M1148 74 L1163 74 L1168.8 80 L1168.8 105 L1148 105 Z" fill="#8ccbf6"/><path d="M1163 74 L1163 80 L1168.8 80 Z" fill="#cfe8fb"/>
<rect x="1131" y="88.5" width="25" height="16.5" fill="#6c7483" stroke="#aab0b8" stroke-width="1.2"/>
<circle cx="1155.8" cy="103.3" r="8.8" fill="none" stroke="#aab0b8" stroke-width="1.3"/>
<rect x="1130" y="104" width="2.5" height="2.5" fill="#ccc" />
<text x="1131.7" y="135" font-family="Liberation Sans" font-size="15" fill="#e8e8e8" font-weight="normal" font-style="normal" text-anchor="start" textLength="37.0" lengthAdjust="spacingAndGlyphs" >Insert</text>
<path d="M1146.8 143.5 L1153.2 143.5 L1150 147.3 Z" fill="#d8d8d8"/>
<rect x="1179.8" y="85.2" width="10" height="9" fill="#636b79" stroke="#aab0b8" stroke-width="1"/><circle cx="1191.7" cy="93.4" r="3.8" fill="#555c68" stroke="#aab0b8" stroke-width="1"/><path d="M1191.7 90 L1191.7 93.4 M1189.8 85.5 L1189.8 90" stroke="#aab0b8" stroke-width="0.8"/>
<rect x="1178.8" y="93.2" width="2.2" height="2.2" fill="#e0e0e0" />
<path d="M1194 77.5 L1195.2 80.8 L1198.2 79.2 L1197 82.3 L1200.3 83.5 L1197 84.7 L1198.2 87.8 L1195.2 86.2 L1194 89.5 L1192.8 86.2 L1189.8 87.8 L1191 84.7 L1187.7 83.5 L1191 82.3 L1189.8 79.2 L1192.8 80.8 Z" fill="#f7cf72"/>
<rect x="1179.8" y="114.2" width="10" height="9.5" fill="#636b79" stroke="#aab0b8" stroke-width="1"/><circle cx="1193.8" cy="123.3" r="3.9" fill="#555c68" stroke="#aab0b8" stroke-width="1"/>
<rect x="1178.8" y="122.5" width="2.2" height="2.2" fill="#e0e0e0" />
<path d="M1189.5 120.5 L1196.5 112.5 L1199 114.8 L1192 122.5 Z" fill="#f7cf72"/><path d="M1189.5 120.5 L1192 122.5 L1188.8 123.5 Z" fill="#e8e8e8"/><circle cx="1198.3" cy="112.6" r="1.7" fill="#e84b50"/>
<path d="M1179 142 L1185 141.5 L1196 152 L1189.5 159 L1179 148.5 Z" fill="#d6d6d6"/><circle cx="1182.5" cy="145" r="1" fill="#666"/>
<path d="M1189 152 L1196 143 L1198.5 145 L1191.5 154 Z" fill="#f7cf72"/><circle cx="1198" cy="143" r="1.6" fill="#e84b50"/>
<path d="M1208.6 148.3 L1215.0 148.3 L1211.8 152.10000000000002 Z" fill="#d8d8d8"/>
<text x="1145.3" y="185.6" font-family="Liberation Sans" font-size="15" fill="#e2e2e2" font-weight="normal" font-style="normal" text-anchor="start" textLength="38.1" lengthAdjust="spacingAndGlyphs" >Block</text>
<path d="M1190.0 179 L1200.0 179 L1195 184.2 Z" fill="#d8d8d8"/>
<rect x="1244.3" y="76" width="25.2" height="34.7" fill="#dcdcdc" stroke="#2c333f" stroke-width="0.6"/>
<rect x="1247.6" y="78.7" width="17" height="13" fill="#8ccbf6" stroke="#555a60" stroke-width="0.9" rx="0.8"/>
<path d="M1249 97.8 L1251 97.8 M1254 97.8 L1264 97.8 M1249 104.5 L1259.5 104.5" stroke="#8a8a8a" stroke-width="0.9"/>
<path d="M1249.5 97.8 L1264 97.8" stroke="#a8a8a8" stroke-width="0.9"/><path d="M1249 104.5 L1259.5 104.5" stroke="#777" stroke-width="0.9"/>
<rect x="1251.2" y="95.8" width="1.8" height="4" fill="#666" />
<rect x="1259.7" y="102.5" width="1.5" height="4.3" fill="#666" />
<path d="M1262.8 104.5 L1268.8 101.9 L1279.2 112.8 L1274.4 115.8 Z" fill="#fbd27a" stroke="#2c333f" stroke-width="0.6"/>
<path d="M1268.8 101.9 L1270.6 100 L1273.4 98.2 L1276.3 100.9 L1280.4 98.3 L1283 100.6 L1280.3 104.2 L1282.8 107.6 L1279.2 112.8 Z" fill="#f2f2f2"/>
<text x="1241.8" y="135.8" font-family="Liberation Sans" font-size="15" fill="#e8e8e8" font-weight="normal" font-style="normal" text-anchor="start" textLength="41.9" lengthAdjust="spacingAndGlyphs" >Match</text>
<text x="1228.7" y="155.5" font-family="Liberation Sans" font-size="15" fill="#e8e8e8" font-weight="normal" font-style="normal" text-anchor="start" textLength="68.5" lengthAdjust="spacingAndGlyphs" >Properties</text>
<g transform="translate(1313,88)"><path d="M0 0 L0 -10 A10 10 0 0 1 8.66 -5 Z" fill="#f6a22c"/><path d="M0 0 L8.66 -5 A10 10 0 0 1 8.66 5 Z" fill="#f06a3a"/><path d="M0 0 L8.66 5 A10 10 0 0 1 0 10 Z" fill="#e0484f"/><path d="M0 0 L0 10 A10 10 0 0 1 -8.66 5 Z" fill="#8b4fe0"/><path d="M0 0 L-8.66 5 A10 10 0 0 1 -8.66 -5 Z" fill="#21a6d0"/><path d="M0 0 L-8.66 -5 A10 10 0 0 1 0 -10 Z" fill="#4fcf6a"/></g>
<rect x="1303" y="109" width="20" height="1.4" fill="#d6d6d6" />
<rect x="1303" y="112.6" width="20" height="2.6" fill="#d6d6d6" />
<rect x="1303" y="117.5" width="20" height="3.6" fill="#d6d6d6" />
<rect x="1303" y="124" width="20" height="5" fill="#d6d6d6" />
<path d="M1303 142 L1323 142" stroke="#bcbcbc" stroke-width="1.1" stroke-dasharray="3 1.2"/>
<path d="M1303 146 L1323 146" stroke="#bcbcbc" stroke-width="1.1" stroke-dasharray="3 1.2"/>
<path d="M1303 150 L1323 150" stroke="#bcbcbc" stroke-width="1.1" stroke-dasharray="3 1.2"/>
<path d="M1303 154 L1323 154" stroke="#bcbcbc" stroke-width="1.1" stroke-dasharray="3 1.2"/>
<rect x="1326.4" y="74.6" width="170" height="26.6" fill="#4a5467" stroke="#2c333f" stroke-width="1"/>
<path d="M1483.8 86.1 L1493.8 86.1 L1488.8 91.3 Z" fill="#d8d8d8"/>
<rect x="1326.4" y="105.6" width="170" height="26.6" fill="#4a5467" stroke="#2c333f" stroke-width="1"/>
<path d="M1483.8 117.1 L1493.8 117.1 L1488.8 122.3 Z" fill="#d8d8d8"/>
<rect x="1326.4" y="137" width="170" height="26.6" fill="#4a5467" stroke="#2c333f" stroke-width="1"/>
<path d="M1483.8 148.5 L1493.8 148.5 L1488.8 153.7 Z" fill="#d8d8d8"/>
<rect x="1335.3" y="78.5" width="19.5" height="19.5" fill="#00e600" stroke="#c8c8c8" stroke-width="1"/>
<text x="1360" y="93.8" font-family="Liberation Sans" font-size="15" fill="#e6e6e6" font-weight="normal" font-style="normal" text-anchor="start" textLength="52" lengthAdjust="spacingAndGlyphs" >ByLayer</text>
<rect x="1335" y="118.6" width="80" height="1.2" fill="#e6e6e6" />
<text x="1417" y="125" font-family="Liberation Sans" font-size="15" fill="#e6e6e6" font-weight="normal" font-style="normal" text-anchor="start" textLength="52" lengthAdjust="spacingAndGlyphs" >ByLayer</text>
<rect x="1335" y="150.6" width="80" height="1.2" fill="#e6e6e6" />
<text x="1417" y="156.2" font-family="Liberation Sans" font-size="15" fill="#e6e6e6" font-weight="normal" font-style="normal" text-anchor="start" textLength="52" lengthAdjust="spacingAndGlyphs" >ByLayer</text>
<text x="1311.1" y="185.6" font-family="Liberation Sans" font-size="15" fill="#e2e2e2" font-weight="normal" font-style="normal" text-anchor="start" textLength="67.6" lengthAdjust="spacingAndGlyphs" >Properties</text>
<path d="M1385.0 179 L1395.0 179 L1390 184.2 Z" fill="#d8d8d8"/>
<path d="M1487.5 177 L1492.5 182 M1492.5 178.5 L1492.5 182 L1489 182" fill="none" stroke="#cfcfcf" stroke-width="1"/>
<path d="M1511 82.5 L1508.5 82.5 L1508.5 115.5 L1511 115.5 M1532 115.5 L1534.5 115.5 L1534.5 98" fill="none" stroke="#d4d4d4" stroke-width="1.1"/>
<rect x="1515.5" y="86.5" width="12.5" height="9.2" fill="#4a6d94" stroke="#6fbcf0" stroke-width="1"/>
<circle cx="1521.5" cy="106.5" r="6.2" fill="#6a707c" stroke="#9aa0a8" stroke-width="0.8"/>
<path d="M1536.5 76 L1538 82 L1543.5 79 L1540.5 84.5 L1546.5 86 L1540.5 87.5 L1543.5 93 L1538 90 L1536.5 96 L1535 90 L1529.5 93 L1532.5 87.5 L1526.5 86 L1532.5 84.5 L1529.5 79 L1535 82 Z" fill="#f7cf72"/>
<text x="1505.3" y="135.8" font-family="Liberation Sans" font-size="15" fill="#e8e8e8" font-weight="normal" font-style="normal" text-anchor="start" textLength="42.4" lengthAdjust="spacingAndGlyphs" >Group</text>
<rect x="1558" y="80.5" width="6.5" height="5.5" fill="#5a88b8" stroke="#6fbcf0" stroke-width="0.8"/><circle cx="1561.5" cy="91.3" r="3.2" fill="#6a707c" stroke="#aaa" stroke-width="0.6"/>
<path d="M1569.5 78.3 L1571.5 78.3 L1571.5 97.5 L1569.5 97.5" fill="none" stroke="#ccc" stroke-width="0.9"/><path d="M1568.5 84.5 L1574.5 90.5 M1574.5 84.5 L1568.5 90.5" stroke="#e84b50" stroke-width="1.5"/>
<path d="M1557.8 109.3 L1556.3 109.3 L1556.3 126 L1557.8 126 M1566.5 109.3 L1568 109.3 L1568 122" fill="none" stroke="#ccc" stroke-width="0.9"/>
<rect x="1559" y="111.5" width="5.8" height="4.6" fill="#5a88b8" stroke="#6fbcf0" stroke-width="0.7"/><circle cx="1562" cy="120.5" r="2.8" fill="#6a707c" stroke="#aaa" stroke-width="0.6"/>
<path d="M1566.5 128 L1567.5 124.5 L1573.5 118.5 L1575.5 120.5 L1569.5 126.5 Z" fill="#f7cf72"/><circle cx="1575" cy="119" r="1.6" fill="#e84b50"/>
<rect x="1552.3" y="136.3" width="28.5" height="26.5" fill="#44546a" stroke="#5aaef0" stroke-width="1.2"/>
<path d="M1558.5 140.5 L1557 140.5 L1557 157.5 L1558.5 157.5 M1568 140.5 L1569.5 140.5 L1569.5 145" fill="none" stroke="#ccc" stroke-width="0.9"/>
<rect x="1560" y="142.5" width="5" height="4.2" fill="none" stroke="#4fcf6a" stroke-width="0.9"/><circle cx="1562.5" cy="151.8" r="2.6" fill="none" stroke="#4fcf6a" stroke-width="0.9"/>
<path d="M1567.5 149 L1567.5 159 L1570 156.5 L1572.5 161 L1574 160.2 L1571.8 155.8 L1575 155.5 Z" fill="#f0f0f0"/>
<text x="1510.3" y="185.6" font-family="Liberation Sans" font-size="15" fill="#e2e2e2" font-weight="normal" font-style="normal" text-anchor="start" textLength="48.4" lengthAdjust="spacingAndGlyphs" >Groups</text>
<path d="M1565.0 179 L1575.0 179 L1570 184.2 Z" fill="#d8d8d8"/>
<rect x="1612" y="91.8" width="35.6" height="8" fill="#f2c866" />
<path d="M1614.0 91.8 L1614.0 96 M1616.9 91.8 L1616.9 94.6 M1619.8 91.8 L1619.8 96 M1622.7 91.8 L1622.7 94.6 M1625.6 91.8 L1625.6 96 M1628.5 91.8 L1628.5 94.6 M1631.4 91.8 L1631.4 96 M1634.3 91.8 L1634.3 94.6 M1637.2 91.8 L1637.2 96 M1640.1 91.8 L1640.1 94.6 M1643.0 91.8 L1643.0 96 M1645.9 91.8 L1645.9 94.6" stroke="#8a7040" stroke-width="0.7"/>
<text x="1601.8" y="136.5" font-family="Liberation Sans" font-size="15" fill="#e8e8e8" font-weight="normal" font-style="normal" text-anchor="start" textLength="56.4" lengthAdjust="spacingAndGlyphs" >Measure</text>
<path d="M1627.0 145 L1633.0 145 L1630 148.8 Z" fill="#d8d8d8"/>
<rect x="1686.5" y="85" width="10.5" height="12.5" fill="#f0f0f0" />
<path d="M1688.5 88.5 L1689.5 88.5 M1691 88.5 L1695.5 88.5 M1688.5 91.5 L1689.5 91.5 M1691 91.5 L1695.5 91.5 M1688.5 94.5 L1689.5 94.5 M1691 94.5 L1695.5 94.5" stroke="#3a8ad0" stroke-width="1.1"/>
<path d="M1677 84 L1677 97 L1680 94.3 L1682.5 98.5 L1684 97.7 L1681.8 93.5 L1685.3 93 Z" fill="#f0f0f0"/>
<path d="M1683 77 L1679.5 83 L1683 83 L1680 88.5 L1686.5 81.5 L1683 81.5 L1686 77 Z" fill="#f7cf72"/>
<rect x="1677.5" y="109.5" width="17.5" height="16.5" fill="none" stroke="#4fcf6a" stroke-width="0.9" stroke-dasharray="1.6 1.1"/>
<path d="M1681.5 111.5 L1692.5 111.5 L1692.5 120.5 L1689 120.5 L1689 124 L1678.8 124 L1678.8 115.5 L1681.5 115.5 Z" fill="#6ecf8a"/>
<path d="M1681.5 115.5 L1681.5 120.5 L1689 120.5" fill="none" stroke="#3b4453" stroke-width="0.9"/>
<path d="M1689 117 L1689 129 L1691.5 126.8 L1694 131 L1695.5 130.2 L1693.3 126 L1696.5 125.7 Z" fill="#f0f0f0"/>
<rect x="1679" y="139.5" width="15" height="20.5" fill="#d2d2d2" rx="1"/>
<rect x="1681" y="141.5" width="11" height="3.5" fill="#555" />
<path d="M1681.2 147.3 h2.6 v2.4 h-2.6 Z M1685.2 147.3 h2.6 v2.4 h-2.6 Z M1689.2 147.3 h2.6 v2.4 h-2.6 Z M1681.2 151.3 h2.6 v2.4 h-2.6 Z M1685.2 151.3 h2.6 v2.4 h-2.6 Z M1689.2 151.3 h2.6 v2.4 h-2.6 Z M1681.2 155.3 h2.6 v2.4 h-2.6 Z M1685.2 155.3 h2.6 v2.4 h-2.6 Z M1689.2 155.3 h2.6 v2.4 h-2.6 Z" fill="#555"/>
<text x="1611.8" y="185.6" font-family="Liberation Sans" font-size="15" fill="#e2e2e2" font-weight="normal" font-style="normal" text-anchor="start" textLength="50.9" lengthAdjust="spacingAndGlyphs" >Utilities</text>
<path d="M1670.0 179 L1680.0 179 L1675 184.2 Z" fill="#d8d8d8"/>
<path d="M1724 81.8 L1751.8 81.8 L1751.8 88 L1733 88 L1733 111.8 L1724 111.8 Z" fill="#d9ab6e"/>
<path d="M1730.8 81.5 Q1730.8 77.5 1734 77.5 L1741 77.5 Q1744.5 77.5 1744.5 81.5 Z" fill="#eeeeee"/>
<path d="M1733 88.8 L1748.5 88.8 L1756 96 L1756 117 L1733 117 Z" fill="#d6d6d6"/><path d="M1748.5 88.8 L1748.5 96 L1756 96 Z" fill="#f0f0f0"/>
<text x="1722.7" y="137.3" font-family="Liberation Sans" font-size="15" fill="#e8e8e8" font-weight="normal" font-style="normal" text-anchor="start" textLength="34.7" lengthAdjust="spacingAndGlyphs" >Paste</text>
<path d="M1736.8 145.5 L1743.2 145.5 L1740 149.3 Z" fill="#d8d8d8"/>
<rect x="1776" y="78" width="15" height="17.5" fill="#d2d2d2" />
<path d="M1778.5 82 L1788.5 82 M1778.5 85 L1788.5 85 M1778.5 88 L1786 88" stroke="#888" stroke-width="0.8"/>
<path d="M1784 84 L1791 94 M1796.5 84.5 L1789 94" stroke="#f2f2f2" stroke-width="1.3"/><circle cx="1788" cy="96.3" r="2" fill="none" stroke="#f2f2f2" stroke-width="1.1"/><circle cx="1794" cy="96.3" r="2" fill="none" stroke="#f2f2f2" stroke-width="1.1"/>
<path d="M1802.8 88.5 L1809.2 88.5 L1806 92.3 Z" fill="#d8d8d8"/>
<path d="M1778 109 L1784 109 L1786 111 L1786 126 L1778 126 Z" fill="#bcbcbc"/>
<path d="M1780 112 L1789 112 L1794 117 L1794 129 L1780 129 Z" fill="#d6d6d6" stroke="#3b4453" stroke-width="0.8"/>
<path d="M1802.8 119.5 L1809.2 119.5 L1806 123.3 Z" fill="#d8d8d8"/>
<text x="1729.7" y="185.6" font-family="Liberation Sans" font-size="15" fill="#e2e2e2" font-weight="normal" font-style="normal" text-anchor="start" textLength="66.3" lengthAdjust="spacingAndGlyphs" >Clipboard</text>
<path d="M1839.8 80.8 L1857.3 80.8 L1857.3 94 L1880 94 L1880 111 L1839.8 111 Z" fill="#dcdcdc"/>
<text x="1843.3" y="137.3" font-family="Liberation Sans" font-size="15" fill="#e8e8e8" font-weight="normal" font-style="normal" text-anchor="start" textLength="32.2" lengthAdjust="spacingAndGlyphs" >Base</text>
<path d="M1856.3 145 L1862.7 145 L1859.5 148.8 Z" fill="#d8d8d8"/>
<text x="1826.0" y="185.6" font-family="Liberation Sans" font-size="15" fill="#e2e2e2" font-weight="normal" font-style="normal" text-anchor="start" textLength="32.7" lengthAdjust="spacingAndGlyphs" >View</text>
<path d="M1866.0 179 L1876.0 179 L1871 184.2 Z" fill="#d8d8d8"/>
<path d="M1886.5 177 L1892 182.5 M1892 178.5 L1892 182.5 L1888 182.5" fill="none" stroke="#cfcfcf" stroke-width="1"/>
<path d="M16.5 225 L25 203" stroke="#5b6472" stroke-width="1"/>
<text x="34.3" y="216.5" font-family="Liberation Sans" font-size="15" fill="#e8e8e8" font-weight="normal" font-style="normal" text-anchor="start" textLength="32.4" lengthAdjust="spacingAndGlyphs" >Start</text>
<text x="95.8" y="216.5" font-family="Liberation Sans" font-size="15" fill="#ffffff" font-weight="bold" font-style="normal" text-anchor="start" textLength="75.9" lengthAdjust="spacingAndGlyphs" >Drawing6*</text>
<path d="M182.2 205.5 L191.8 215 M191.8 205.5 L182.2 215" stroke="#bdbdbd" stroke-width="1.9"/>
<text x="216.1" y="216.5" font-family="Liberation Sans" font-size="15" fill="#e8e8e8" font-weight="normal" font-style="normal" text-anchor="start" textLength="23.2" lengthAdjust="spacingAndGlyphs" >RRr</text>
<path d="M265.5 220 L273 200" stroke="#5b6472" stroke-width="1"/>
<path d="M286 210 L302 210 M294 202 L294 218" stroke="#e4e4e4" stroke-width="2"/>
<path d="M315.5 220 L323 200" stroke="#5b6472" stroke-width="1"/>
<text x="38.5" y="250" font-family="Liberation Sans" font-size="15" fill="#dedede" font-weight="normal" font-style="normal" text-anchor="start" textLength="180" lengthAdjust="spacingAndGlyphs" >[−][Custom View][Realistic]</text>
<rect x="1837.7" y="248" width="13.5" height="3" fill="#e8e8e8" />
<rect x="1865" y="240" width="11" height="10" fill="none" stroke="#e8e8e8" stroke-width="1.4"/>
<rect x="1863" y="243" width="10.5" height="10" fill="#e8e8e8" />
<rect x="1866" y="246" width="4.5" height="4" fill="#1a1f26" />
<path d="M1888.5 241 L1899.5 251 M1899.5 241 L1888.5 251" stroke="#ececec" stroke-width="2.8"/>
<path d="M12 240.4 h1.1 v1.1 h-1.1 Z M12 242.2 h1.1 v1.1 h-1.1 Z M14 240.4 h1.1 v1.1 h-1.1 Z M14 242.2 h1.1 v1.1 h-1.1 Z M16 240.4 h1.1 v1.1 h-1.1 Z M16 242.2 h1.1 v1.1 h-1.1 Z M18 240.4 h1.1 v1.1 h-1.1 Z M18 242.2 h1.1 v1.1 h-1.1 Z M20 240.4 h1.1 v1.1 h-1.1 Z M20 242.2 h1.1 v1.1 h-1.1 Z" fill="#d0d0d0"/>
<text x="0" y="0" font-family="Liberation Sans" font-size="15" fill="#e0e0e0" textLength="170" lengthAdjust="spacingAndGlyphs" transform="translate(24.2 717) rotate(-90)">Layer Properties Manager</text>
<defs>
<linearGradient id="dTopH" x1="0" x2="1" y1="0" y2="0">
 <stop offset="0" stop-color="#b25800"/><stop offset="0.045" stop-color="#b35a00"/><stop offset="0.06" stop-color="#a35200"/>
 <stop offset="0.94" stop-color="#a35200"/><stop offset="0.975" stop-color="#8a4500"/><stop offset="0.993" stop-color="#6e3a00"/><stop offset="1" stop-color="#854400"/>
</linearGradient>
<linearGradient id="dBotH" x1="0" x2="1" y1="0" y2="0">
 <stop offset="0" stop-color="#934a00"/><stop offset="0.04" stop-color="#924a00"/><stop offset="0.06" stop-color="#8d4800"/>
 <stop offset="0.955" stop-color="#8d4800"/><stop offset="0.98" stop-color="#b07030"/><stop offset="1" stop-color="#9a5a18"/>
</linearGradient>
<linearGradient id="ridge" x1="0" x2="0" y1="0" y2="1">
 <stop offset="0" stop-color="#a35200"/><stop offset="0.25" stop-color="#c86e18"/><stop offset="0.5" stop-color="#e68a30"/>
 <stop offset="0.72" stop-color="#d07820"/><stop offset="0.9" stop-color="#a05408"/><stop offset="1" stop-color="#8d4800"/>
</linearGradient>
<linearGradient id="dBotV" x1="0" x2="0" y1="0" y2="1">
 <stop offset="0" stop-color="#000" stop-opacity="0"/><stop offset="0.3" stop-color="#000" stop-opacity="0.3"/><stop offset="1" stop-color="#000" stop-opacity="0.36"/>
</linearGradient>
<radialGradient id="pip" cx="0.64" cy="0.64" r="0.78" fx="0.66" fy="0.66">
 <stop offset="0" stop-color="#fff49a"/><stop offset="0.1" stop-color="#ffc060"/><stop offset="0.25" stop-color="#d87818"/>
 <stop offset="0.5" stop-color="#ad5806"/><stop offset="0.75" stop-color="#8a4602"/><stop offset="1" stop-color="#5e3000"/>
</radialGradient>
<radialGradient id="pip2" cx="0.5" cy="0.5" r="0.5">
 <stop offset="0" stop-color="#eaa868" stop-opacity="0.95"/><stop offset="1" stop-color="#eaa868" stop-opacity="0"/>
</radialGradient>
<radialGradient id="shadow" cx="0.5" cy="0.5" r="0.5">
 <stop offset="0" stop-color="#101418" stop-opacity="0.55"/><stop offset="1" stop-color="#101418" stop-opacity="0"/>
</radialGradient>
</defs>
<path d="M746 377 L1022 377 Q1036 377 1036 391 L1036 537 L732 537 L732 391 Q732 377 746 377 Z" fill="url(#dTopH)"/>
<defs><clipPath id="dbclip"><path d="M732 530 L1036 530 L1036 770 L1020 780.8 L747 780.8 Q734 780 732.5 763 Z"/></clipPath></defs>
<g clip-path="url(#dbclip)"><rect x="732" y="530" width="304" height="251" fill="url(#dBotH)"/><rect x="732" y="771" width="304" height="10" fill="url(#dBotV)"/></g>
<defs><linearGradient id="ridgeEnd" x1="0" x2="1" y1="0" y2="0"><stop offset="0" stop-color="#fff" stop-opacity="1"/><stop offset="0.93" stop-color="#fff" stop-opacity="1"/><stop offset="1" stop-color="#fff" stop-opacity="0"/></linearGradient><mask id="rmask"><rect x="732" y="519" width="304" height="18" fill="url(#ridgeEnd)"/></mask></defs>
<rect x="732" y="519" width="294" height="18" fill="url(#ridge)" rx="3" mask="url(#rmask)"/>
<defs><radialGradient id="pg1" gradientUnits="userSpaceOnUse" cx="892.8" cy="454.4" r="36.875" fx="892.8" fy="454.4"><stop offset="0" stop-color="#fff59c"/><stop offset="0.09" stop-color="#ffd070"/><stop offset="0.22" stop-color="#e88a28"/><stop offset="0.42" stop-color="#bf660c"/><stop offset="0.7" stop-color="#985004"/><stop offset="1" stop-color="#663400"/></radialGradient><radialGradient id="ps1" gradientUnits="userSpaceOnUse" cx="868.8" cy="441.7" r="12"><stop offset="0" stop-color="#eaa868" stop-opacity="0.9"/><stop offset="0.4" stop-color="#dc9450" stop-opacity="0.65"/><stop offset="1" stop-color="#c07030" stop-opacity="0"/></radialGradient></defs>
<ellipse cx="883.8" cy="448" rx="29.5" ry="15" fill="url(#pg1)"/>
<ellipse cx="883.8" cy="448" rx="29.5" ry="15" fill="url(#ps1)"/>
<defs><radialGradient id="pg2" gradientUnits="userSpaceOnUse" cx="817.5999999999999" cy="597" r="36.875" fx="817.5999999999999" fy="597"><stop offset="0" stop-color="#fff59c"/><stop offset="0.09" stop-color="#ffd070"/><stop offset="0.22" stop-color="#e88a28"/><stop offset="0.42" stop-color="#bf660c"/><stop offset="0.7" stop-color="#985004"/><stop offset="1" stop-color="#663400"/></radialGradient><radialGradient id="ps2" gradientUnits="userSpaceOnUse" cx="794.0" cy="583" r="12"><stop offset="0" stop-color="#eaa868" stop-opacity="0.9"/><stop offset="0.4" stop-color="#dc9450" stop-opacity="0.65"/><stop offset="1" stop-color="#c07030" stop-opacity="0"/></radialGradient></defs>
<ellipse cx="808.8" cy="590" rx="29.5" ry="26" fill="url(#pg2)"/>
<ellipse cx="808.8" cy="590" rx="29.5" ry="26" fill="url(#ps2)"/>
<defs><radialGradient id="pg3" gradientUnits="userSpaceOnUse" cx="817.5999999999999" cy="727.8" r="36.875" fx="817.5999999999999" fy="727.8"><stop offset="0" stop-color="#fff59c"/><stop offset="0.09" stop-color="#ffd070"/><stop offset="0.22" stop-color="#e88a28"/><stop offset="0.42" stop-color="#bf660c"/><stop offset="0.7" stop-color="#985004"/><stop offset="1" stop-color="#663400"/></radialGradient><radialGradient id="ps3" gradientUnits="userSpaceOnUse" cx="794.0" cy="713.8" r="12"><stop offset="0" stop-color="#eaa868" stop-opacity="0.9"/><stop offset="0.4" stop-color="#dc9450" stop-opacity="0.65"/><stop offset="1" stop-color="#c07030" stop-opacity="0"/></radialGradient></defs>
<ellipse cx="808.8" cy="720.8" rx="29.5" ry="26" fill="url(#pg3)"/>
<ellipse cx="808.8" cy="720.8" rx="29.5" ry="26" fill="url(#ps3)"/>
<defs><radialGradient id="pg4" gradientUnits="userSpaceOnUse" cx="969.0" cy="597" r="36.875" fx="969.0" fy="597"><stop offset="0" stop-color="#fff59c"/><stop offset="0.09" stop-color="#ffd070"/><stop offset="0.22" stop-color="#e88a28"/><stop offset="0.42" stop-color="#bf660c"/><stop offset="0.7" stop-color="#985004"/><stop offset="1" stop-color="#663400"/></radialGradient><radialGradient id="ps4" gradientUnits="userSpaceOnUse" cx="945.4000000000001" cy="583" r="12"><stop offset="0" stop-color="#eaa868" stop-opacity="0.9"/><stop offset="0.4" stop-color="#dc9450" stop-opacity="0.65"/><stop offset="1" stop-color="#c07030" stop-opacity="0"/></radialGradient></defs>
<ellipse cx="960.2" cy="590" rx="29.5" ry="26" fill="url(#pg4)"/>
<ellipse cx="960.2" cy="590" rx="29.5" ry="26" fill="url(#ps4)"/>
<defs><radialGradient id="pg5" gradientUnits="userSpaceOnUse" cx="969.0" cy="727.8" r="36.875" fx="969.0" fy="727.8"><stop offset="0" stop-color="#fff59c"/><stop offset="0.09" stop-color="#ffd070"/><stop offset="0.22" stop-color="#e88a28"/><stop offset="0.42" stop-color="#bf660c"/><stop offset="0.7" stop-color="#985004"/><stop offset="1" stop-color="#663400"/></radialGradient><radialGradient id="ps5" gradientUnits="userSpaceOnUse" cx="945.4000000000001" cy="713.8" r="12"><stop offset="0" stop-color="#eaa868" stop-opacity="0.9"/><stop offset="0.4" stop-color="#dc9450" stop-opacity="0.65"/><stop offset="1" stop-color="#c07030" stop-opacity="0"/></radialGradient></defs>
<ellipse cx="960.2" cy="720.8" rx="29.5" ry="26" fill="url(#pg5)"/>
<ellipse cx="960.2" cy="720.8" rx="29.5" ry="26" fill="url(#ps5)"/>
<path d="M731 394 Q733 378 748.5 377.5" fill="none" stroke="#3d7fe6" stroke-width="2.2"/>
<path d="M1023 377.5 Q1036 379 1037.5 394" fill="none" stroke="#3d7fe6" stroke-width="2.2"/>
<defs><radialGradient id="dhl" cx="0.62" cy="0.5" r="0.5"><stop offset="0" stop-color="#fff0a0"/><stop offset="0.4" stop-color="#e89038"/><stop offset="1" stop-color="#b86010"/></radialGradient></defs>
<path d="M750 514 L750 539 Q733 538 731 527 Q733 515 750 514 Z" fill="url(#dhl)" stroke="#3d7fe6" stroke-width="2"/>
<path d="M747.5 517 L747.5 536 Q736 535 734 527 Q736 518 747.5 517 Z" fill="none" stroke="#e8a060" stroke-width="0.8"/>
<path d="M1018.8 537 Q1034 537 1038.6 528" fill="none" stroke="#3d7fe6" stroke-width="2.6"/>
<path d="M731.5 764 Q735 774 750.5 774.5" fill="none" stroke="#3d7fe6" stroke-width="2.2"/><path d="M733.5 766 Q737 772.5 749 772.8" fill="none" stroke="#f08a30" stroke-width="0.7" stroke-dasharray="2 1.5"/>
<path d="M1019.8 772.8 Q1031 771.5 1037.6 762.8 Q1036.5 776.5 1022.5 781.5 L1019.8 782 Z" fill="#7a3e00" stroke="#3d7fe6" stroke-width="2.2" stroke-linejoin="round"/>
<path d="M1036 622.5 Q1039 627.5 1036 633" fill="none" stroke="#3d7fe6" stroke-width="2"/>
<path d="M728.5 562.5 L743.8 562.5 L729 577 L744 577" fill="none" stroke="#2a7ae8" stroke-width="1"/>
<rect x="728.3" y="580.5" width="7.4" height="51" fill="#4a78b8" rx="2"/>
<rect x="728.3" y="631" width="7.4" height="35" fill="#b24a50" rx="2"/>
<rect x="736" y="630" width="57" height="7" fill="#3f9c48"/>
<path d="M793 630 L795 633.5 L793 637 Z" fill="#3f9c48"/>
<path d="M787.5 613 L794.8 620 L802.2 613 M794.8 620 L794.8 628" fill="none" stroke="#1fb21f" stroke-width="1"/>
<path d="M728.5 646.5 L743.2 660.5 M743.2 646.5 L728.5 660.5" stroke="#e82020" stroke-width="1"/>
<ellipse cx="732" cy="664.5" rx="3" ry="1.8" fill="#e0a0a0"/>
<path d="M1415.5 327.8 L1415.5 383" stroke="#7a78ff" stroke-width="1"/>
<path d="M1415.5 396 L1415.5 421" stroke="#7a78ff" stroke-width="1"/>
<path d="M1415.5 421 L1415.5 426" stroke="#e05050" stroke-width="1"/>
<path d="M1381 389.5 L1410 389.5 M1421 389.5 L1487 389.5" stroke="#5ae05a" stroke-width="1"/>
<rect x="1410.5" y="383.5" width="10" height="12" fill="none" stroke="#ffffff" stroke-width="1.2"/>
<ellipse cx="1819" cy="386" rx="73" ry="40" fill="url(#shadow)" opacity="0"/>
<path fill-rule="evenodd" d="M1746.7 385.4 A72.5 39.6 0 1 0 1891.7 385.4 A72.5 39.6 0 1 0 1746.7 385.4 Z M1762.5 383.5 A56.7 29.5 0 1 0 1875.9 383.5 A56.7 29.5 0 1 0 1762.5 383.5 Z" fill="#434b57"/>
<ellipse cx="1819" cy="392" rx="34" ry="8" fill="#1a1f26" opacity="0.25"/>
<defs><linearGradient id="cubeF" x1="0" x2="0" y1="0" y2="1">
<stop offset="0" stop-color="#b9bcc0"/><stop offset="1" stop-color="#9b9ea2"/></linearGradient></defs>
<path d="M1792.5 314 L1845 314 L1848.3 340 L1789.7 340 Z" fill="#a9adb1"/>
<path d="M1789.7 340 L1848.3 340 L1847.5 389 L1791.5 389 Z" fill="url(#cubeF)"/>
<rect x="1801" y="335.5" width="37" height="14.5" fill="#a2a5aa" />
<path d="M1789.7 340.2 L1848.3 340.2" stroke="#5c6066" stroke-width="0.9" stroke-dasharray="10 4"/>
<text x="1819.4" y="370" font-family="Liberation Sans" font-size="13" fill="#51565d" font-weight="bold" font-style="normal" text-anchor="middle" textLength="37.5" lengthAdjust="spacingAndGlyphs" >RIGHT</text>
<g transform="translate(1818.8 327) scale(1.25 0.95) rotate(90)"><text x="0" y="0" font-family="Liberation Sans" font-size="8.5" font-weight="bold" fill="#55595f" text-anchor="middle" textLength="10.5" lengthAdjust="spacingAndGlyphs" dominant-baseline="central">TOP</text></g>
<g transform="translate(1752 377.5) scale(1.37 0.68) rotate(90)"><text x="0" y="0" font-family="Liberation Sans" font-size="20" font-weight="bold" fill="#b4b6b9" text-anchor="middle" dominant-baseline="central">S</text></g>
<g transform="translate(1885 377) scale(1.41 0.56) rotate(90)"><text x="0" y="0" font-family="Liberation Sans" font-size="20" font-weight="bold" fill="#b4b6b9" text-anchor="middle" dominant-baseline="central">N</text></g>
<g transform="translate(1818.7 421.7) scale(1.6 0.88) rotate(90)"><text x="0" y="0" font-family="Liberation Sans" font-size="20" font-weight="bold" fill="#b4b6b9" text-anchor="middle" dominant-baseline="central">E</text></g>
<rect x="1790.5" y="449.5" width="56" height="20.5" fill="#8a8e97" rx="5"/>
<text x="1808.5" y="465" font-family="Liberation Sans" font-size="12" fill="#6a6e76" font-weight="normal" font-style="normal" text-anchor="middle" textLength="28" lengthAdjust="spacingAndGlyphs" >WCS</text>
<path d="M1830.5 456.5 L1840 456.5 L1835.2 462 Z" fill="none" stroke="#a5a9b0" stroke-width="1"/>
<rect x="1869" y="501" width="40.3" height="258.6" fill="#5c6066" rx="4"/>
<circle cx="1901.8" cy="507" r="3.4" fill="#54585e" stroke="#464a50" stroke-width="0.9"/><path d="M1900.2 505.4 L1903.4 508.6 M1903.4 505.4 L1900.2 508.6" stroke="#6a6e74" stroke-width="0.8"/>
<path d="M1888.8 522 L1900.5 522 Q1902.5 522 1902.5 524 L1902.5 535.7 A13.7 13.7 0 1 1 1888.8 522 Z" fill="none" stroke="#464a50" stroke-width="1.8"/>
<circle cx="1888.8" cy="535.7" r="7" fill="none" stroke="#464a50" stroke-width="1.8"/>
<path d="M1883.5 540.5 L1879 545.5 M1894 540.5 L1898.5 545.5" stroke="#464a50" stroke-width="1.6"/>
<path d="M1886.0 557.5 L1892.0 557.5 L1889 561.0 Z" fill="#464a50"/>
<path d="M1873 569.5 L1906 569.5" stroke="#54585e" stroke-width="1"/>
<path d="M1881 601.5 L1876 593 Q1874 590 1876.5 589.5 Q1878.5 589.5 1880.5 592.5 L1881 578 Q1881 575.5 1883 575.5 Q1885 575.5 1885 578 L1885.5 576 Q1885.5 574 1887.8 574 Q1890 574 1890 576.5 L1890.3 577.5 Q1890.5 575.5 1892.6 575.5 Q1894.6 575.5 1894.6 578 L1894.8 581.5 Q1895.2 579.5 1897.2 579.5 Q1899.2 579.5 1899 582 L1898 594 Q1897 601.5 1893 601.5 Z" fill="#585c62" stroke="#464a50" stroke-width="1.5" stroke-linejoin="round"/>
<path d="M1885 578 L1885.2 590 M1890 577 L1890 590 M1894.6 579 L1894.4 590" stroke="#464a50" stroke-width="0.9"/>
<path d="M1874.5 609 L1889 623.5 M1893.5 609 L1874.5 628" fill="none" stroke="#464a50" stroke-width="1.6"/>
<path d="M1873.8 608.6 L1880 608.6 L1873.8 614.8 Z M1893.9 608.6 L1887.7 608.6 L1893.9 614.8 Z M1873.8 628.7 L1873.8 622.5 L1880 628.7 Z" fill="#464a50"/>
<circle cx="1893" cy="627.5" r="5" fill="#585c62" stroke="#464a50" stroke-width="1.8"/><path d="M1896.5 631 L1902 636.5" stroke="#464a50" stroke-width="2.6" stroke-linecap="round"/>
<path d="M1886.0 647 L1892.0 647 L1889 650.5 Z" fill="#464a50"/>
<ellipse cx="1889" cy="672.5" rx="13.8" ry="4.8" fill="none" stroke="#464a50" stroke-width="1.6"/>
<path d="M1886.5 683 L1886.5 663 L1883.5 663 L1889 656 L1894.5 663 L1891.5 663 L1891.5 683 Z" fill="#585c62" stroke="#464a50" stroke-width="1.4"/>
<path d="M1878.5 668 L1878.5 679 L1872.5 673.5 Z" fill="#464a50"/>
<path d="M1886.0 693.8 L1892.0 693.8 L1889 697.3 Z" fill="#464a50"/>
<path d="M1873 702.5 L1906 702.5" stroke="#54585e" stroke-width="1"/>
<rect x="1874.5" y="708.5" width="6" height="6" fill="none" stroke="#464a50" stroke-width="1.4"/><rect x="1883" y="708.5" width="6" height="6" fill="none" stroke="#464a50" stroke-width="1.4"/><rect x="1891.5" y="708.5" width="6" height="6" fill="none" stroke="#464a50" stroke-width="1.4"/>
<rect x="1874.5" y="718" width="17" height="13" fill="none" stroke="#464a50" stroke-width="1.4"/><path d="M1880 720.5 L1887.5 724.5 L1880 728.5 Z" fill="#464a50"/>
<circle cx="1902" cy="753.5" r="3.3" fill="#54585e" stroke="#464a50" stroke-width="0.9"/><path d="M1900.3 752.5 L1902 754.5 L1903.7 752.5" fill="none" stroke="#6a6e74" stroke-width="0.8"/>
<path d="M25.6 1040 L100 1040 L88 1069.8 L14.4 1069.8 Z" fill="#3b4453"/>
<text x="34.9" y="1060.6" font-family="Liberation Sans" font-size="15" fill="#ffffff" font-weight="bold" font-style="normal" text-anchor="start" textLength="44.55" lengthAdjust="spacingAndGlyphs" >Model</text>
<text x="108.7" y="1060.6" font-family="Liberation Sans" font-size="15" fill="#e8e8e8" font-weight="normal" font-style="normal" text-anchor="start" textLength="31.4" lengthAdjust="spacingAndGlyphs" >A3_1</text>
<path d="M152 1065 L159.8 1045" stroke="#5b6472" stroke-width="1"/>
<path d="M173.2 1055 L188.8 1055 M181 1047.5 L181 1062.5" stroke="#e4e4e4" stroke-width="2"/>
<path d="M202 1065 L209.8 1045" stroke="#5b6472" stroke-width="1"/>
<rect x="1231.6" y="1043" width="59.4" height="28.6" fill="#3b4453" />
<text x="1236" y="1063.3" font-family="Liberation Sans" font-size="15" fill="#f0f0f0" font-weight="normal" font-style="normal" text-anchor="start" textLength="51.2" lengthAdjust="spacingAndGlyphs" >MODEL</text>
<rect x="1294" y="1042.2" width="79.8" height="29.5" fill="#3b4453" />
<path d="M1303.4 1047 L1303.4 1066 M1308.3 1047 L1308.3 1066 M1313.5 1047 L1313.5 1066 M1299 1051.5 L1318.2 1051.5 M1299 1056.6 L1318.2 1056.6 M1299 1061.6 L1318.2 1061.6" stroke="#e6e6e6" stroke-width="1.1"/>
<path d="M1331.3 1049.2 h2.6 v2.6 h-2.6 Z M1331.3 1055.2 h2.6 v2.6 h-2.6 Z M1331.3 1061.1000000000001 h2.6 v2.6 h-2.6 Z M1337.3 1049.2 h2.6 v2.6 h-2.6 Z M1337.3 1055.2 h2.6 v2.6 h-2.6 Z M1337.3 1061.1000000000001 h2.6 v2.6 h-2.6 Z M1343.2 1049.2 h2.6 v2.6 h-2.6 Z M1343.2 1055.2 h2.6 v2.6 h-2.6 Z M1343.2 1061.1000000000001 h2.6 v2.6 h-2.6 Z" fill="#e0e0e0"/>
<path d="M1359.0 1054 L1369.0 1054 L1364 1059 Z" fill="#dedede"/>
<rect x="1377" y="1042.2" width="211" height="29.5" fill="#3b4453" />
<path d="M1382.3 1047 L1382.3 1066.5 L1402 1066.5 M1382.3 1060.2 L1389 1060.2 L1389 1066.5" fill="none" stroke="#dedede" stroke-width="1.1"/>
<circle cx="1419.6" cy="1057.3" r="7.6" fill="none" stroke="#cfcfcf" stroke-width="1.1"/><path d="M1420 1057.3 L1432 1057.3 M1420 1057.3 L1428.5 1048.2" stroke="#dedede" stroke-width="1.1"/>
<path d="M1442.0 1054 L1452.0 1054 L1447 1059 Z" fill="#dedede"/>
<path d="M1464.5 1048 L1479 1064" stroke="#d05050" stroke-width="1.1"/><path d="M1472.4 1047 L1472.4 1065" stroke="#3fd050" stroke-width="1.1"/>
<rect x="1470.8" y="1054.4" width="3.2" height="3.2" fill="#3b4453" stroke="#d8d8d8" stroke-width="1"/>
<path d="M1492.0 1054 L1502.0 1054 L1497 1059 Z" fill="#dedede"/>
<rect x="1509" y="1043" width="28" height="28" fill="#6190c4" />
<path d="M1513.5 1063.8 L1527.8 1049 M1513.5 1063.8 L1533 1063.8" stroke="#f0f0f0" stroke-width="1.1"/><path d="M1533 1063.8 L1513.5 1063.8" stroke="#c8d8ea" stroke-width="1.3"/>
<rect x="1518.8" y="1055" width="3.2" height="3.2" fill="#f0f0f0" />
<rect x="1539" y="1043" width="28" height="28" fill="#6190c4" />
<path d="M1550.5 1048.8 L1562.3 1048.8 L1562.3 1066.6 L1545.3 1066.6 L1545.3 1053.5" fill="none" stroke="#f0f0f0" stroke-width="1.1"/>
<rect x="1543" y="1046.8" width="5" height="5" fill="none" stroke="#f0f0f0" stroke-width="1.1"/>
<path d="M1573.0 1054 L1583.0 1054 L1578 1059 Z" fill="#dedede"/>
<rect x="1591" y="1042.2" width="132" height="29.5" fill="#3b4453" />
<rect x="1592" y="1043" width="28" height="28" fill="#6190c4" />
<path d="M1604.6 1047 L1607.1 1056 L1605.8 1056 L1607.1 1058.5 L1613.1 1066.5 L1606.6 1063 L1604.6 1066.5 L1602.6 1063 L1596.1 1066.5 L1602.1 1058.5 L1603.3999999999999 1056 L1602.1 1056 Z" fill="#ffffff"/>
<circle cx="1611.7" cy="1051.5" r="3.2" fill="none" stroke="#ffffff" stroke-width="1"/>
<path d="M1634.6 1047 L1637.1 1056 L1635.8 1056 L1637.1 1058.5 L1643.1 1066.5 L1636.6 1063 L1634.6 1066.5 L1632.6 1063 L1626.1 1066.5 L1632.1 1058.5 L1633.3999999999999 1056 L1632.1 1056 Z" fill="#d6d6d6"/>
<path d="M1643 1047.5 L1639.8 1052.5 L1642.5 1052.5 L1640 1057 L1645 1051 L1642.3 1051 L1644.8 1047.5 Z" fill="#d6d6d6"/>
<path d="M1665.4 1047 L1667.9 1056 L1666.6000000000001 1056 L1667.9 1058.5 L1673.9 1066.5 L1667.4 1063 L1665.4 1066.5 L1663.4 1063 L1656.9 1066.5 L1662.9 1058.5 L1664.2 1056 L1662.9 1056 Z" fill="#d6d6d6"/>
<text x="1686.5" y="1063" font-family="Liberation Sans" font-size="15" fill="#f0f0f0" font-weight="normal" font-style="normal" text-anchor="start" textLength="16" lengthAdjust="spacingAndGlyphs" >1:1</text>
<path d="M1708.0 1054 L1718.0 1054 L1713 1059 Z" fill="#dedede"/>
<rect x="1726" y="1042.2" width="49.7" height="29.5" fill="#3b4453" />
<path fill-rule="evenodd" d="M1749.76 1054.82 L1749.76 1059.18 L1746.83 1059.57 L1746.65 1060.01 L1748.44 1062.36 L1745.36 1065.44 L1743.01 1063.65 L1742.57 1063.83 L1742.18 1066.76 L1737.82 1066.76 L1737.43 1063.83 L1736.99 1063.65 L1734.64 1065.44 L1731.56 1062.36 L1733.35 1060.01 L1733.17 1059.57 L1730.24 1059.18 L1730.24 1054.82 L1733.17 1054.43 L1733.35 1053.99 L1731.56 1051.64 L1734.64 1048.56 L1736.99 1050.35 L1737.43 1050.17 L1737.82 1047.24 L1742.18 1047.24 L1742.57 1050.17 L1743.01 1050.35 L1745.36 1048.56 L1748.44 1051.64 L1746.65 1053.99 L1746.83 1054.43 Z M1743.2 1057 A3.2 3.2 0 1 0 1736.8 1057 A3.2 3.2 0 1 0 1743.2 1057 Z" fill="#d6d6d6"/>
<path d="M1761.0 1054 L1771.0 1054 L1766 1059 Z" fill="#dedede"/>
<rect x="1777.3" y="1042.2" width="29.6" height="29.5" fill="#3b4453" />
<path d="M1782 1056.5 L1801 1056.5 M1791.5 1047 L1791.5 1066" stroke="#e0e0e0" stroke-width="3"/>
<rect x="1810" y="1042.2" width="30" height="29.5" fill="#3b4453" />
<rect x="1815.3" y="1047.3" width="7.8" height="7.8" fill="none" stroke="#dedede" stroke-width="1.1"/><circle cx="1830.4" cy="1055.6" r="4.2" fill="none" stroke="#dedede" stroke-width="1.1"/><path d="M1818.7 1059 L1823.4 1066.4 L1814 1066.4 Z" fill="none" stroke="#dedede" stroke-width="1.1"/>
<rect x="1843" y="1042.2" width="4" height="29.5" fill="#3b4453" />
<rect x="1850" y="1042.2" width="60" height="29.5" fill="#3b4453" />
<rect x="1855.5" y="1049" width="19.5" height="14.8" fill="none" stroke="#d6d6d6" stroke-width="1.1"/>
<path d="M1862 1056.5 L1857.5 1061 M1868.5 1056.5 L1873 1052" stroke="#d6d6d6" stroke-width="1.2"/><path d="M1857 1058 L1857 1061.5 L1860.5 1061.5 Z M1873.5 1055 L1873.5 1051.5 L1870 1051.5 Z" fill="#d6d6d6"/>
<rect x="1885" y="1047.8" width="20" height="2.4" fill="#e0e0e0" />
<rect x="1885" y="1055.5" width="20" height="2.4" fill="#e0e0e0" />
<rect x="1885" y="1062.8" width="20" height="2.4" fill="#e0e0e0" />
<rect x="295" y="889" width="32" height="156.5" fill="#283039" opacity="0.88" rx="2"/>
<path d="M325 889 L1441.5 889 Q1444 889 1444 891.5 L1444 1042.5 Q1444 1045 1441.5 1045 L325 1045 Z" fill="#c1c2c4"/>
<rect x="325" y="889" width="1119" height="131" fill="#9b9b9b" rx="0"/>
<rect x="325" y="1019.5" width="1119" height="1.5" fill="#2a2d32" />
<rect x="325" y="1036" width="1119" height="4.5" fill="#cacdd2" />
<path d="M299.2 896 h2 v1.8 h-2 Z M299.2 899.5 h2 v1.8 h-2 Z M302.7 896 h2 v1.8 h-2 Z M302.7 899.5 h2 v1.8 h-2 Z M306.2 896 h2 v1.8 h-2 Z M306.2 899.5 h2 v1.8 h-2 Z M309.7 896 h2 v1.8 h-2 Z M309.7 899.5 h2 v1.8 h-2 Z M313.2 896 h2 v1.8 h-2 Z M313.2 899.5 h2 v1.8 h-2 Z M316.7 896 h2 v1.8 h-2 Z M316.7 899.5 h2 v1.8 h-2 Z M320.2 896 h2 v1.8 h-2 Z M320.2 899.5 h2 v1.8 h-2 Z" fill="#d0d0d0"/>
<path d="M301.5 910 L312.5 920.5 M312.5 910 L301.5 920.5" stroke="#cfcfcf" stroke-width="1.8"/>
<path d="M299.5 954 L311 942.5" stroke="#c8c8c8" stroke-width="2.6" stroke-linecap="round"/>
<path d="M309.5 944 A4.6 4.6 0 1 1 316 938 L313.6 940.2 L312.4 938.8 Z" fill="#c8c8c8"/>
<text x="328.2" y="919.2" font-family="Liberation Mono" font-size="15" fill="#141414" font-weight="normal" font-style="normal" text-anchor="start" textLength="340.09999999999997" lengthAdjust="spacingAndGlyphs" >Select an edge chain or [Edge/Radius]:</text>
<text x="328.2" y="938.1" font-family="Liberation Mono" font-size="15" fill="#141414" font-weight="normal" font-style="normal" text-anchor="start" textLength="214.79999999999998" lengthAdjust="spacingAndGlyphs" >Resuming FILLET command.</text>
<text x="328.2" y="957.0" font-family="Liberation Mono" font-size="15" fill="#141414" font-weight="normal" font-style="normal" text-anchor="start" textLength="340.09999999999997" lengthAdjust="spacingAndGlyphs" >Select an edge chain or [Edge/Radius]:</text>
<text x="328.2" y="975.9" font-family="Liberation Mono" font-size="15" fill="#141414" font-weight="normal" font-style="normal" text-anchor="start" textLength="277.45" lengthAdjust="spacingAndGlyphs" >12 edge(s) selected for fillet.</text>
<text x="328.2" y="994.8" font-family="Liberation Mono" font-size="15" fill="#141414" font-weight="normal" font-style="normal" text-anchor="start" textLength="71.6" lengthAdjust="spacingAndGlyphs" >Command:</text>
<text x="328.2" y="1013.7" font-family="Liberation Mono" font-size="15" fill="#141414" font-weight="normal" font-style="normal" text-anchor="start" textLength="71.6" lengthAdjust="spacingAndGlyphs" >Command:</text>
<rect x="330.5" y="1026" width="19" height="14" fill="none" stroke="#6a6a6a" stroke-width="1"/><rect x="330.5" y="1026" width="19" height="3" fill="#6a6a6a"/>
<path d="M332.5 1032 L335 1034 L332.5 1036 M335.5 1037 L339 1037" fill="none" stroke="#6a6a6a" stroke-width="0.8"/>
<path d="M352.5 1030.5 L361.5 1030.5 L357 1035.5 Z" fill="#5a5a5a"/>
<text x="370.5" y="1038.2" font-family="Liberation Mono" font-size="15" fill="#7e7e7e" font-weight="normal" font-style="italic" text-anchor="start" textLength="126" lengthAdjust="spacingAndGlyphs" >Type a command</text>
<path d="M1428.5 1035.8 L1433 1030.8 L1437.5 1035.8 Z" fill="#5a5a5a"/>
</svg>
</body></html>
